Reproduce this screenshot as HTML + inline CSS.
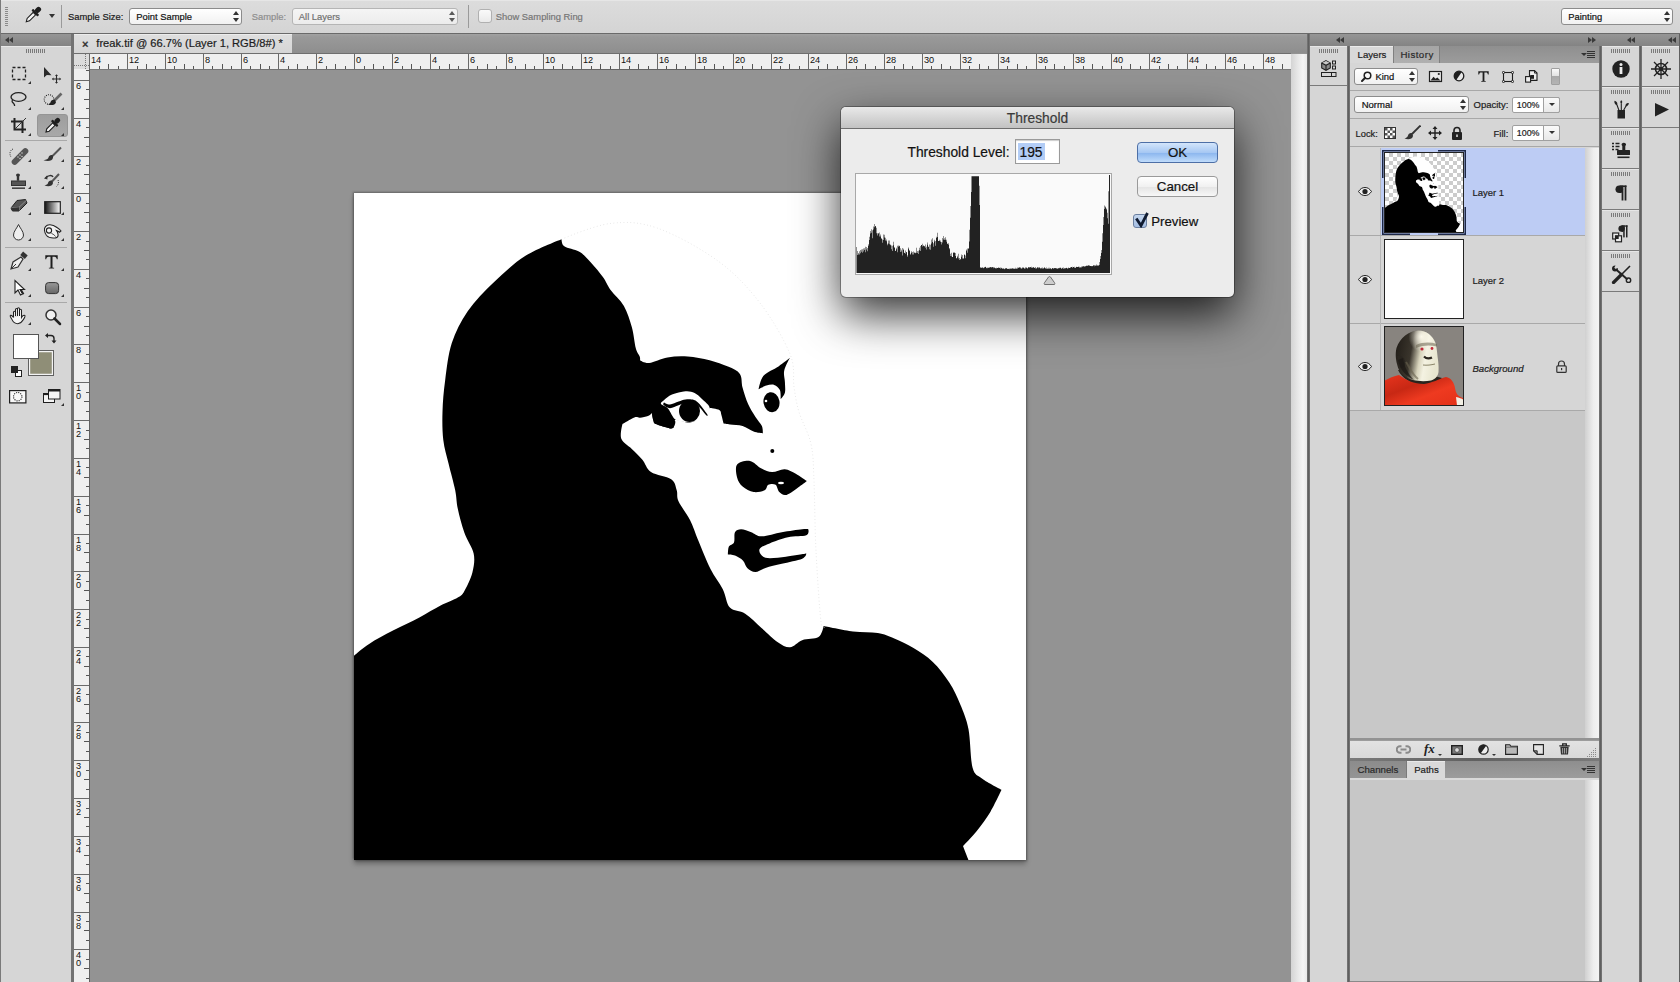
<!DOCTYPE html><html><head><meta charset="utf-8"><style>
*{margin:0;padding:0;box-sizing:border-box}
html,body{width:1680px;height:982px;overflow:hidden;background:#939393;font-family:"Liberation Sans", sans-serif;}
.a{position:absolute}
.t{position:absolute;white-space:nowrap;line-height:1;-webkit-text-stroke:0.2px currentColor}
.grip{position:absolute;height:4px;background:repeating-linear-gradient(90deg,#7a7a7a 0 1px,transparent 1px 2px)}
.vsep{position:absolute;background:#707070}
.tri{position:absolute;width:0;height:0;border-left:3px solid transparent;border-bottom:3px solid #333}
</style></head><body>
<div class="a" style="left:0;top:0;width:1680px;height:33px;background:linear-gradient(#dcdcdc,#d4d4d4);border-top:1px solid #e6e6e6"></div>
<div class="a" style="left:0;top:33px;width:1680px;height:1px;background:#6a6a6a"></div>
<div class="a" style="left:0;top:0;width:1px;height:982px;background:#7a7a7a"></div>
<div class="a" style="left:5px;top:7px;width:3px;height:19px;background:repeating-linear-gradient(180deg,#8a8a8a 0 1px,transparent 1px 2px)"></div>
<svg class="a" style="left:23px;top:6px" width="19" height="19" viewBox="0 0 19 19"><g transform="rotate(45 9.5 9.5)"><rect x="7" y="-1.5" width="5" height="6.3" rx="2.3" fill="#1e1e1e"/><rect x="5.2" y="4.3" width="8.6" height="2.5" rx=".8" fill="#1e1e1e"/><path d="M7.8 6.8h3.4v8.6L9.5 18.3l-1.7-2.9z" fill="#f4f4f4" stroke="#1e1e1e" stroke-width="1.1"/></g></svg>
<div class="a" style="left:49px;top:14px;width:0;height:0;border-left:3.5px solid transparent;border-right:3.5px solid transparent;border-top:4px solid #333"></div>
<div class="a" style="left:61px;top:5px;width:1px;height:23px;background:#9a9a9a"></div>
<div class="t" style="left:68px;top:12.00px;font-size:9.4px;color:#1a1a1a;">Sample Size:</div>
<div class="a" style="left:129px;top:8px;width:113px;height:17px;background:linear-gradient(#ffffff,#f1f1f1);border:1px solid #8c8c8c;border-radius:3px"></div><div class="t" style="left:136.3px;top:12.00px;font-size:9.4px;color:#111;">Point Sample</div><div class="a" style="left:233px;top:11px;width:0;height:0;border-left:3px solid transparent;border-right:3px solid transparent;border-bottom:4px solid #333"></div><div class="a" style="left:233px;top:18px;width:0;height:0;border-left:3px solid transparent;border-right:3px solid transparent;border-top:4px solid #333"></div>
<div class="t" style="left:251.7px;top:12.00px;font-size:9.4px;color:#8e8e8e;">Sample:</div>
<div class="a" style="left:292px;top:8px;width:166px;height:17px;background:linear-gradient(#f5f5f5,#ececec);border:1px solid #b5b5b5;border-radius:3px"></div><div class="t" style="left:298.8px;top:12.00px;font-size:9.4px;color:#707070;">All Layers</div><div class="a" style="left:449px;top:11px;width:0;height:0;border-left:3px solid transparent;border-right:3px solid transparent;border-bottom:4px solid #5a5a5a"></div><div class="a" style="left:449px;top:18px;width:0;height:0;border-left:3px solid transparent;border-right:3px solid transparent;border-top:4px solid #5a5a5a"></div>
<div class="a" style="left:468px;top:5px;width:1px;height:23px;background:#9a9a9a"></div>
<div class="a" style="left:478px;top:9px;width:14px;height:14px;border:1px solid #b0b0b0;border-radius:3px;background:linear-gradient(#fafafa,#eaeaea)"></div>
<div class="t" style="left:495.8px;top:12.00px;font-size:9.4px;color:#767676;">Show Sampling Ring</div>
<div class="a" style="left:1561px;top:8px;width:112px;height:17px;background:linear-gradient(#ffffff,#f1f1f1);border:1px solid #8c8c8c;border-radius:3px"></div><div class="t" style="left:1568.3px;top:12.00px;font-size:9.4px;color:#111;">Painting</div><div class="a" style="left:1664px;top:11px;width:0;height:0;border-left:3px solid transparent;border-right:3px solid transparent;border-bottom:4px solid #333"></div><div class="a" style="left:1664px;top:18px;width:0;height:0;border-left:3px solid transparent;border-right:3px solid transparent;border-top:4px solid #333"></div>
<div class="a" style="left:1px;top:34px;width:70px;height:12px;background:linear-gradient(#959595,#838383)"></div>
<div class="a" style="left:5px;top:37px;width:0;height:0;border-top:3px solid transparent;border-bottom:3px solid transparent;border-right:4px solid #3a3a3a"></div>
<div class="a" style="left:9px;top:37px;width:0;height:0;border-top:3px solid transparent;border-bottom:3px solid transparent;border-right:4px solid #3a3a3a"></div>
<div class="a" style="left:1px;top:46px;width:70px;height:936px;background:#d6d6d6;border-top:1px solid #e8e8e8"></div>
<div class="a" style="left:71px;top:34px;width:3px;height:948px;background:#737373"></div>
<div class="grip" style="left:26px;top:49px;width:20px"></div>
<div class="a" style="left:5px;top:140px;width:62px;height:1px;background:#a9a9a9"></div>
<div class="a" style="left:5px;top:247px;width:62px;height:1px;background:#a9a9a9"></div>
<div class="a" style="left:5px;top:302px;width:62px;height:1px;background:#a9a9a9"></div>
<div class="a" style="left:37px;top:114px;width:31px;height:23px;border-radius:3px;background:linear-gradient(#9e9e9e,#a8a8a8);border:1px solid #959595"></div>
<svg class="a" style="left:12px;top:67px;overflow:visible" width="15" height="14" viewBox="0 0 15 14"><rect x="0.5" y="0.5" width="13" height="12" fill="none" stroke="#222" stroke-width="1.3" stroke-dasharray="3 2"/></svg>
<svg class="a" style="left:44px;top:67px;overflow:visible" width="19" height="19" viewBox="0 0 19 19"><path d="M0 0 L0 10.5 L2.8 8 L7.5 8.3 Z" fill="#2a2a2a"/><path d="M12.5 8.5v7M9 12h7" stroke="#2a2a2a" stroke-width="1.1"/><path d="M12.5 7.3l-1.5 1.7h3zM12.5 16.7l-1.5-1.7h3zM7.8 12l1.7-1.5v3zM17.2 12l-1.7-1.5v3z" fill="#2a2a2a"/></svg>
<svg class="a" style="left:10px;top:92px;overflow:visible" width="17" height="15" viewBox="0 0 17 15"><ellipse cx="8.5" cy="5" rx="7.5" ry="4.3" fill="none" stroke="#222" stroke-width="1.3"/><path d="M2.5 8c-1 1.5 0 3 1.2 3.2M3.3 11c.6.8 1.5 1.6 1.3 3" fill="none" stroke="#222" stroke-width="1.3"/></svg>
<svg class="a" style="left:44px;top:93px;overflow:visible" width="18" height="13" viewBox="0 0 18 13"><circle cx="5" cy="6.5" r="4.8" fill="none" stroke="#222" stroke-width="1.1" stroke-dasharray="1 1.1"/><path d="M17.5 .5 10.5 7.5" stroke="#666" stroke-width="2.6"/><path d="M11 7c-1.8-.8-3.8 0-4.3 1.8-.4 1.3-1.3 2.2-2.7 2.6 3 1.3 7.3.8 8-2.2z" fill="#222"/></svg>
<svg class="a" style="left:11px;top:118px;overflow:visible" width="16" height="16" viewBox="0 0 16 16"><path d="M3.5 0v11.5H15M0 3.5h11.5V15" fill="none" stroke="#222" stroke-width="2"/><path d="M4 11L15 0" stroke="#333" stroke-width="1"/></svg>
<svg class="a" style="left:43px;top:117px;overflow:visible" width="18" height="18" viewBox="0 0 18 18"><g transform="rotate(45 9 9)"><rect x="6.6" y="-1.5" width="4.8" height="6" rx="2.2" fill="#1e1e1e"/><rect x="4.8" y="4" width="8.4" height="2.4" rx=".8" fill="#1e1e1e"/><path d="M7.3 6.4h3.4v8.3L9 17.5l-1.7-2.8z" fill="#f2f2f2" stroke="#1e1e1e" stroke-width="1.1"/></g></svg>
<svg class="a" style="left:9px;top:147px;overflow:visible" width="19" height="16" viewBox="0 0 19 16"><path d="M4 2c-3 1-4 5-2 8" fill="none" stroke="#333" stroke-width="1" stroke-dasharray="1 1.2"/><rect x="8" y="-1" width="6" height="21" rx="3" transform="rotate(45 11 9.5)" fill="#555"/><g fill="#ddd"><circle cx="9" cy="10" r=".7"/><circle cx="11" cy="8" r=".7"/><circle cx="13" cy="6" r=".7"/><circle cx="11" cy="11.5" r=".7"/><circle cx="13" cy="9.5" r=".7"/></g></svg>
<svg class="a" style="left:43px;top:147px;overflow:visible" width="18" height="15" viewBox="0 0 18 15"><path d="M18 .5 9.5 9" stroke="#555" stroke-width="2"/><path d="M10 8.5c-2-1-4 0-4.5 2-.3 1.4-2 2.2-5 2.8 4 1.3 9 1 9.5-2.5z" fill="#333"/></svg>
<svg class="a" style="left:11px;top:173px;overflow:visible" width="15" height="16" viewBox="0 0 15 16"><path d="M5.5 1a2.5 2.5 0 0 1 3 0c.8.8.4 2-.3 2.5v4.3H5.8V3.5C5.1 3 4.7 1.8 5.5 1z" fill="#333"/><rect x="0.5" y="8" width="14" height="4.5" fill="#555" stroke="#333"/><rect x="1" y="14.5" width="13" height="1.3" fill="#222"/></svg>
<svg class="a" style="left:43px;top:173px;overflow:visible" width="18" height="15" viewBox="0 0 18 15"><path d="M3 5c2-3 6-3 7-1" fill="none" stroke="#333" stroke-width="1.5"/><path d="M1 5.5 4 2.5 4.5 6.5z" fill="#333"/><path d="M16 1 9 8.5" stroke="#555" stroke-width="2"/><path d="M9.5 8c-2-1-4 0-4.5 2-.3 1.4-1.5 2-3.5 2.5 3.5 1.3 8 1 8.5-2.5z" fill="#333"/><path d="M15 7c1 2 .5 5-1.5 6.5" fill="none" stroke="#333" stroke-width="1" stroke-dasharray="1 1.2"/></svg>
<svg class="a" style="left:10px;top:199px;overflow:visible" width="18" height="13" viewBox="0 0 18 13"><path d="M7 1.5 15.5 .5 17 4 9 12H2.5L1 9z" fill="#555" stroke="#222" stroke-width="1"/><path d="M1 9 9 8.3 17 .8M9 8.3 9 12" fill="none" stroke="#999" stroke-width=".8"/><path d="M1 9 2.5 12H9V8.3z" fill="#333"/></svg>
<svg class="a" style="left:44px;top:201px;overflow:visible" width="17" height="13" viewBox="0 0 17 13"><defs><linearGradient id="gg"><stop offset="0" stop-color="#111"/><stop offset="1" stop-color="#fff"/></linearGradient></defs><rect x=".7" y=".7" width="15.6" height="11.6" fill="url(#gg)" stroke="#222" stroke-width="1.2"/></svg>
<svg class="a" style="left:13px;top:224px;overflow:visible" width="11" height="17" viewBox="0 0 11 17"><path d="M5.5.5C4 4 .5 7.5.5 11a5 5 0 0 0 10 0C10.5 7.5 7 4 5.5.5z" fill="#eee" stroke="#333" stroke-width="1"/></svg>
<svg class="a" style="left:43px;top:224px;overflow:visible" width="18" height="15" viewBox="0 0 18 15"><path d="M1.5 6.5C1 3.5 3 1 6.5.8 9.5.6 12 2 14 3.5 15.5 4.5 17 5.5 18 7l-1.5 1.2c-1-.8-2-1.3-3-1.6.8 1 1.3 2.2 1.5 3.5.3 1.6-.6 3.4-2.5 3.8C9 14.3 5.5 13.8 3.5 11.5 2.3 10 1.7 8.3 1.5 6.5z" fill="#f2f2f2" stroke="#222" stroke-width="1.1"/><circle cx="6" cy="6.5" r="2.6" fill="none" stroke="#222" stroke-width="1.1"/><path d="M8.5 9.5c1.5.5 3 1.5 4 3" fill="none" stroke="#222" stroke-width=".9"/></svg>
<svg class="a" style="left:10px;top:253px;overflow:visible" width="17" height="17" viewBox="0 0 17 17"><path d="M11 4 3 9 1 16l7-2 5-8z" fill="#eee" stroke="#333" stroke-width="1.2"/><path d="M1 16l5-5" stroke="#333" stroke-width="1"/><rect x="11" y="0" width="6" height="4.5" transform="rotate(40 14 2.2)" fill="#333"/></svg>
<svg class="a" style="left:45px;top:255px;overflow:visible" width="13" height="14" viewBox="0 0 13 14"><path d="M.3 .3h12.4v4h-.9C11.5 2.5 11 1.7 9.5 1.7H7.5v10.2c0 .6.4.8 1.6.8v.9H3.9v-.9c1.2 0 1.6-.2 1.6-.8V1.7h-2C2 1.7 1.5 2.5 1.2 4.3H.3z" fill="#1e1e1e"/></svg>
<svg class="a" style="left:14px;top:280px;overflow:visible" width="11" height="15" viewBox="0 0 11 15"><path d="M1 .5v12.5l3-3 2.5 5 2-1-2.5-4.5h4.5z" fill="#fff" stroke="#222" stroke-width="1.1"/><path d="M6 10l3 4.5 1.3-.7-2.5-4.3z" fill="#222"/></svg>
<svg class="a" style="left:45px;top:282px;overflow:visible" width="14" height="13" viewBox="0 0 14 13"><defs><linearGradient id="rg" x1="0" y1="0" x2="0" y2="1"><stop offset="0" stop-color="#999"/><stop offset="1" stop-color="#666"/></linearGradient></defs><rect x=".6" y=".6" width="13" height="11" rx="3" fill="url(#rg)" stroke="#333" stroke-width="1"/></svg>
<svg class="a" style="left:9px;top:307px;overflow:visible" width="17" height="17" viewBox="0 0 17 17"><path d="M4.5 10.5V5.2c0-1.4 2-1.4 2 0V9M6.5 9V2.5c0-1.4 2-1.4 2 0V9M8.5 9V1.7c0-1.4 2-1.4 2 0V9M10.5 9V3.3c0-1.4 2-1.4 2 0v7.2c.9-1.5 2.2-2.6 3.3-2 .8.5-.4 2.4-1.8 4.6-1.2 2-2.3 3.6-5.2 3.6-3 0-4.8-1.8-5.6-3.8C2.5 11.2 1 9.8 1.2 8.8c.3-1 2-.3 3.3 1.7" fill="#f6f6f6" stroke="#222" stroke-width="1.05"/></svg>
<svg class="a" style="left:45px;top:309px;overflow:visible" width="16" height="16" viewBox="0 0 16 16"><circle cx="6" cy="6" r="5" fill="#f0f0f0" stroke="#333" stroke-width="1.5"/><path d="M9.5 9.5l5.5 5.5" stroke="#222" stroke-width="2.5" stroke-linecap="round"/></svg>
<svg class="a" style="left:45px;top:332px;overflow:visible" width="12" height="12" viewBox="0 0 12 12"><path d="M2 3.5h4c2 0 3 1 3 3v2.5" fill="none" stroke="#222" stroke-width="1.4"/><path d="M0 3.5 3 1v5zM9 11.5l-2.5-3h5z" fill="#222"/></svg>
<svg class="a" style="left:9px;top:390px;overflow:visible" width="18" height="14" viewBox="0 0 18 14"><rect x=".6" y=".6" width="16.3" height="12.3" fill="#f8f8f8" stroke="#1e1e1e" stroke-width="1.2"/><circle cx="8.7" cy="6.7" r="4.2" fill="none" stroke="#1e1e1e" stroke-width="1.1" stroke-dasharray="1.1 1.1"/></svg>
<svg class="a" style="left:43px;top:389px;overflow:visible" width="18" height="14" viewBox="0 0 18 14"><rect x=".5" y="4.5" width="11" height="9" fill="#f4f4f4" stroke="#1e1e1e" stroke-width="1"/><rect x=".5" y="4.5" width="11" height="1.6" fill="#1e1e1e"/><rect x="5.5" y=".5" width="11.5" height="9.5" fill="#f4f4f4" stroke="#1e1e1e" stroke-width="1"/><rect x="5.5" y=".5" width="11.5" height="2" fill="#1e1e1e"/></svg>
<div class="tri" style="left:28px;top:81px"></div>
<div class="tri" style="left:28px;top:107px"></div>
<div class="tri" style="left:28px;top:133px"></div>
<div class="tri" style="left:61px;top:107px"></div>
<div class="tri" style="left:61px;top:133px"></div>
<div class="tri" style="left:28px;top:159px"></div>
<div class="tri" style="left:61px;top:159px"></div>
<div class="tri" style="left:28px;top:186px"></div>
<div class="tri" style="left:61px;top:186px"></div>
<div class="tri" style="left:28px;top:212px"></div>
<div class="tri" style="left:61px;top:212px"></div>
<div class="tri" style="left:28px;top:238px"></div>
<div class="tri" style="left:61px;top:238px"></div>
<div class="tri" style="left:28px;top:268px"></div>
<div class="tri" style="left:61px;top:268px"></div>
<div class="tri" style="left:28px;top:294px"></div>
<div class="tri" style="left:61px;top:294px"></div>
<div class="tri" style="left:28px;top:322px"></div>
<div class="tri" style="left:61px;top:403px"></div>
<div class="a" style="left:28px;top:350px;width:26px;height:26px;background:#8f8e77;border:1px solid #606060;box-shadow:inset 0 0 0 1.2px #f4f4f4"></div>
<div class="a" style="left:13px;top:334px;width:26px;height:25px;background:#fff;border:1px solid #555"></div>
<div class="a" style="left:15px;top:370px;width:7px;height:7px;background:#fff;border:1px solid #222"></div>
<div class="a" style="left:11px;top:366px;width:7px;height:7px;background:#222"></div>
<div class="a" style="left:74px;top:34px;width:1233px;height:19px;background:linear-gradient(#a2a2a2,#999 15%,#8e8e8e)"></div>
<div class="a" style="left:74px;top:34px;width:218px;height:19px;background:linear-gradient(#dedede,#d5d5d5);border-top:1px solid #ececec"></div>
<div class="t" style="left:82px;top:39px;font-size:11px;color:#333;font-weight:bold">&#215;</div>
<div class="t" style="left:96.3px;top:38.00px;font-size:11.15px;color:#1d1d1d;">freak.tif @ 66.7% (Layer 1, RGB/8#) *</div>
<div class="a" style="left:74px;top:53px;width:1217px;height:1px;background:#6e6e6e"></div>
<div class="a" style="left:74px;top:54px;width:1217px;height:15px;background:#efefef"></div>
<div class="a" style="left:74px;top:69px;width:1217px;height:1px;background:linear-gradient(90deg,#7a7a7a,#606060 50%,#7a7a7a)"></div>
<div class="a" style="left:74px;top:54px;width:15px;height:928px;background:#efefef"></div>
<div class="a" style="left:89px;top:69px;width:1px;height:913px;background:linear-gradient(90deg,#7a7a7a,#606060 50%,#7a7a7a)"></div>
<div class="a" style="left:74px;top:54px;width:15px;height:15px;background:#dcdcdc"></div>
<div class="a" style="left:85px;top:54px;width:1px;height:16px;background:repeating-linear-gradient(180deg,#777 0 1px,transparent 1px 2px)"></div>
<div class="a" style="left:74px;top:65px;width:15px;height:1px;background:repeating-linear-gradient(90deg,#777 0 1px,transparent 1px 2px)"></div>
<div class="a" style="left:89px;top:54px;width:1px;height:15px;background:#6a6a6a"></div><div class="t" style="left:91px;top:56px;font-size:9.2px;color:#111;-webkit-text-stroke:0">14</div><div class="a" style="left:99px;top:66px;width:1px;height:3px;background:#555"></div><div class="a" style="left:108px;top:64px;width:1px;height:5px;background:#555"></div><div class="a" style="left:118px;top:66px;width:1px;height:3px;background:#555"></div><div class="a" style="left:127px;top:54px;width:1px;height:15px;background:#6a6a6a"></div><div class="t" style="left:129px;top:56px;font-size:9.2px;color:#111;-webkit-text-stroke:0">12</div><div class="a" style="left:137px;top:66px;width:1px;height:3px;background:#555"></div><div class="a" style="left:146px;top:64px;width:1px;height:5px;background:#555"></div><div class="a" style="left:155px;top:66px;width:1px;height:3px;background:#555"></div><div class="a" style="left:165px;top:54px;width:1px;height:15px;background:#6a6a6a"></div><div class="t" style="left:167px;top:56px;font-size:9.2px;color:#111;-webkit-text-stroke:0">10</div><div class="a" style="left:174px;top:66px;width:1px;height:3px;background:#555"></div><div class="a" style="left:184px;top:64px;width:1px;height:5px;background:#555"></div><div class="a" style="left:193px;top:66px;width:1px;height:3px;background:#555"></div><div class="a" style="left:203px;top:54px;width:1px;height:15px;background:#6a6a6a"></div><div class="t" style="left:205px;top:56px;font-size:9.2px;color:#111;-webkit-text-stroke:0">8</div><div class="a" style="left:212px;top:66px;width:1px;height:3px;background:#555"></div><div class="a" style="left:222px;top:64px;width:1px;height:5px;background:#555"></div><div class="a" style="left:231px;top:66px;width:1px;height:3px;background:#555"></div><div class="a" style="left:241px;top:54px;width:1px;height:15px;background:#6a6a6a"></div><div class="t" style="left:243px;top:56px;font-size:9.2px;color:#111;-webkit-text-stroke:0">6</div><div class="a" style="left:250px;top:66px;width:1px;height:3px;background:#555"></div><div class="a" style="left:260px;top:64px;width:1px;height:5px;background:#555"></div><div class="a" style="left:269px;top:66px;width:1px;height:3px;background:#555"></div><div class="a" style="left:278px;top:54px;width:1px;height:15px;background:#6a6a6a"></div><div class="t" style="left:280px;top:56px;font-size:9.2px;color:#111;-webkit-text-stroke:0">4</div><div class="a" style="left:288px;top:66px;width:1px;height:3px;background:#555"></div><div class="a" style="left:297px;top:64px;width:1px;height:5px;background:#555"></div><div class="a" style="left:307px;top:66px;width:1px;height:3px;background:#555"></div><div class="a" style="left:316px;top:54px;width:1px;height:15px;background:#6a6a6a"></div><div class="t" style="left:318px;top:56px;font-size:9.2px;color:#111;-webkit-text-stroke:0">2</div><div class="a" style="left:326px;top:66px;width:1px;height:3px;background:#555"></div><div class="a" style="left:335px;top:64px;width:1px;height:5px;background:#555"></div><div class="a" style="left:345px;top:66px;width:1px;height:3px;background:#555"></div><div class="a" style="left:354px;top:54px;width:1px;height:15px;background:#6a6a6a"></div><div class="t" style="left:356px;top:56px;font-size:9.2px;color:#111;-webkit-text-stroke:0">0</div><div class="a" style="left:364px;top:66px;width:1px;height:3px;background:#555"></div><div class="a" style="left:373px;top:64px;width:1px;height:5px;background:#555"></div><div class="a" style="left:383px;top:66px;width:1px;height:3px;background:#555"></div><div class="a" style="left:392px;top:54px;width:1px;height:15px;background:#6a6a6a"></div><div class="t" style="left:394px;top:56px;font-size:9.2px;color:#111;-webkit-text-stroke:0">2</div><div class="a" style="left:402px;top:66px;width:1px;height:3px;background:#555"></div><div class="a" style="left:411px;top:64px;width:1px;height:5px;background:#555"></div><div class="a" style="left:420px;top:66px;width:1px;height:3px;background:#555"></div><div class="a" style="left:430px;top:54px;width:1px;height:15px;background:#6a6a6a"></div><div class="t" style="left:432px;top:56px;font-size:9.2px;color:#111;-webkit-text-stroke:0">4</div><div class="a" style="left:439px;top:66px;width:1px;height:3px;background:#555"></div><div class="a" style="left:449px;top:64px;width:1px;height:5px;background:#555"></div><div class="a" style="left:458px;top:66px;width:1px;height:3px;background:#555"></div><div class="a" style="left:468px;top:54px;width:1px;height:15px;background:#6a6a6a"></div><div class="t" style="left:470px;top:56px;font-size:9.2px;color:#111;-webkit-text-stroke:0">6</div><div class="a" style="left:477px;top:66px;width:1px;height:3px;background:#555"></div><div class="a" style="left:487px;top:64px;width:1px;height:5px;background:#555"></div><div class="a" style="left:496px;top:66px;width:1px;height:3px;background:#555"></div><div class="a" style="left:506px;top:54px;width:1px;height:15px;background:#6a6a6a"></div><div class="t" style="left:508px;top:56px;font-size:9.2px;color:#111;-webkit-text-stroke:0">8</div><div class="a" style="left:515px;top:66px;width:1px;height:3px;background:#555"></div><div class="a" style="left:525px;top:64px;width:1px;height:5px;background:#555"></div><div class="a" style="left:534px;top:66px;width:1px;height:3px;background:#555"></div><div class="a" style="left:543px;top:54px;width:1px;height:15px;background:#6a6a6a"></div><div class="t" style="left:545px;top:56px;font-size:9.2px;color:#111;-webkit-text-stroke:0">10</div><div class="a" style="left:553px;top:66px;width:1px;height:3px;background:#555"></div><div class="a" style="left:562px;top:64px;width:1px;height:5px;background:#555"></div><div class="a" style="left:572px;top:66px;width:1px;height:3px;background:#555"></div><div class="a" style="left:581px;top:54px;width:1px;height:15px;background:#6a6a6a"></div><div class="t" style="left:583px;top:56px;font-size:9.2px;color:#111;-webkit-text-stroke:0">12</div><div class="a" style="left:591px;top:66px;width:1px;height:3px;background:#555"></div><div class="a" style="left:600px;top:64px;width:1px;height:5px;background:#555"></div><div class="a" style="left:610px;top:66px;width:1px;height:3px;background:#555"></div><div class="a" style="left:619px;top:54px;width:1px;height:15px;background:#6a6a6a"></div><div class="t" style="left:621px;top:56px;font-size:9.2px;color:#111;-webkit-text-stroke:0">14</div><div class="a" style="left:629px;top:66px;width:1px;height:3px;background:#555"></div><div class="a" style="left:638px;top:64px;width:1px;height:5px;background:#555"></div><div class="a" style="left:648px;top:66px;width:1px;height:3px;background:#555"></div><div class="a" style="left:657px;top:54px;width:1px;height:15px;background:#6a6a6a"></div><div class="t" style="left:659px;top:56px;font-size:9.2px;color:#111;-webkit-text-stroke:0">16</div><div class="a" style="left:666px;top:66px;width:1px;height:3px;background:#555"></div><div class="a" style="left:676px;top:64px;width:1px;height:5px;background:#555"></div><div class="a" style="left:685px;top:66px;width:1px;height:3px;background:#555"></div><div class="a" style="left:695px;top:54px;width:1px;height:15px;background:#6a6a6a"></div><div class="t" style="left:697px;top:56px;font-size:9.2px;color:#111;-webkit-text-stroke:0">18</div><div class="a" style="left:704px;top:66px;width:1px;height:3px;background:#555"></div><div class="a" style="left:714px;top:64px;width:1px;height:5px;background:#555"></div><div class="a" style="left:723px;top:66px;width:1px;height:3px;background:#555"></div><div class="a" style="left:733px;top:54px;width:1px;height:15px;background:#6a6a6a"></div><div class="t" style="left:735px;top:56px;font-size:9.2px;color:#111;-webkit-text-stroke:0">20</div><div class="a" style="left:742px;top:66px;width:1px;height:3px;background:#555"></div><div class="a" style="left:752px;top:64px;width:1px;height:5px;background:#555"></div><div class="a" style="left:761px;top:66px;width:1px;height:3px;background:#555"></div><div class="a" style="left:771px;top:54px;width:1px;height:15px;background:#6a6a6a"></div><div class="t" style="left:773px;top:56px;font-size:9.2px;color:#111;-webkit-text-stroke:0">22</div><div class="a" style="left:780px;top:66px;width:1px;height:3px;background:#555"></div><div class="a" style="left:789px;top:64px;width:1px;height:5px;background:#555"></div><div class="a" style="left:799px;top:66px;width:1px;height:3px;background:#555"></div><div class="a" style="left:808px;top:54px;width:1px;height:15px;background:#6a6a6a"></div><div class="t" style="left:810px;top:56px;font-size:9.2px;color:#111;-webkit-text-stroke:0">24</div><div class="a" style="left:818px;top:66px;width:1px;height:3px;background:#555"></div><div class="a" style="left:827px;top:64px;width:1px;height:5px;background:#555"></div><div class="a" style="left:837px;top:66px;width:1px;height:3px;background:#555"></div><div class="a" style="left:846px;top:54px;width:1px;height:15px;background:#6a6a6a"></div><div class="t" style="left:848px;top:56px;font-size:9.2px;color:#111;-webkit-text-stroke:0">26</div><div class="a" style="left:856px;top:66px;width:1px;height:3px;background:#555"></div><div class="a" style="left:865px;top:64px;width:1px;height:5px;background:#555"></div><div class="a" style="left:875px;top:66px;width:1px;height:3px;background:#555"></div><div class="a" style="left:884px;top:54px;width:1px;height:15px;background:#6a6a6a"></div><div class="t" style="left:886px;top:56px;font-size:9.2px;color:#111;-webkit-text-stroke:0">28</div><div class="a" style="left:894px;top:66px;width:1px;height:3px;background:#555"></div><div class="a" style="left:903px;top:64px;width:1px;height:5px;background:#555"></div><div class="a" style="left:912px;top:66px;width:1px;height:3px;background:#555"></div><div class="a" style="left:922px;top:54px;width:1px;height:15px;background:#6a6a6a"></div><div class="t" style="left:924px;top:56px;font-size:9.2px;color:#111;-webkit-text-stroke:0">30</div><div class="a" style="left:931px;top:66px;width:1px;height:3px;background:#555"></div><div class="a" style="left:941px;top:64px;width:1px;height:5px;background:#555"></div><div class="a" style="left:950px;top:66px;width:1px;height:3px;background:#555"></div><div class="a" style="left:960px;top:54px;width:1px;height:15px;background:#6a6a6a"></div><div class="t" style="left:962px;top:56px;font-size:9.2px;color:#111;-webkit-text-stroke:0">32</div><div class="a" style="left:969px;top:66px;width:1px;height:3px;background:#555"></div><div class="a" style="left:979px;top:64px;width:1px;height:5px;background:#555"></div><div class="a" style="left:988px;top:66px;width:1px;height:3px;background:#555"></div><div class="a" style="left:998px;top:54px;width:1px;height:15px;background:#6a6a6a"></div><div class="t" style="left:1000px;top:56px;font-size:9.2px;color:#111;-webkit-text-stroke:0">34</div><div class="a" style="left:1007px;top:66px;width:1px;height:3px;background:#555"></div><div class="a" style="left:1017px;top:64px;width:1px;height:5px;background:#555"></div><div class="a" style="left:1026px;top:66px;width:1px;height:3px;background:#555"></div><div class="a" style="left:1036px;top:54px;width:1px;height:15px;background:#6a6a6a"></div><div class="t" style="left:1038px;top:56px;font-size:9.2px;color:#111;-webkit-text-stroke:0">36</div><div class="a" style="left:1045px;top:66px;width:1px;height:3px;background:#555"></div><div class="a" style="left:1054px;top:64px;width:1px;height:5px;background:#555"></div><div class="a" style="left:1064px;top:66px;width:1px;height:3px;background:#555"></div><div class="a" style="left:1073px;top:54px;width:1px;height:15px;background:#6a6a6a"></div><div class="t" style="left:1075px;top:56px;font-size:9.2px;color:#111;-webkit-text-stroke:0">38</div><div class="a" style="left:1083px;top:66px;width:1px;height:3px;background:#555"></div><div class="a" style="left:1092px;top:64px;width:1px;height:5px;background:#555"></div><div class="a" style="left:1102px;top:66px;width:1px;height:3px;background:#555"></div><div class="a" style="left:1111px;top:54px;width:1px;height:15px;background:#6a6a6a"></div><div class="t" style="left:1113px;top:56px;font-size:9.2px;color:#111;-webkit-text-stroke:0">40</div><div class="a" style="left:1121px;top:66px;width:1px;height:3px;background:#555"></div><div class="a" style="left:1130px;top:64px;width:1px;height:5px;background:#555"></div><div class="a" style="left:1140px;top:66px;width:1px;height:3px;background:#555"></div><div class="a" style="left:1149px;top:54px;width:1px;height:15px;background:#6a6a6a"></div><div class="t" style="left:1151px;top:56px;font-size:9.2px;color:#111;-webkit-text-stroke:0">42</div><div class="a" style="left:1159px;top:66px;width:1px;height:3px;background:#555"></div><div class="a" style="left:1168px;top:64px;width:1px;height:5px;background:#555"></div><div class="a" style="left:1177px;top:66px;width:1px;height:3px;background:#555"></div><div class="a" style="left:1187px;top:54px;width:1px;height:15px;background:#6a6a6a"></div><div class="t" style="left:1189px;top:56px;font-size:9.2px;color:#111;-webkit-text-stroke:0">44</div><div class="a" style="left:1196px;top:66px;width:1px;height:3px;background:#555"></div><div class="a" style="left:1206px;top:64px;width:1px;height:5px;background:#555"></div><div class="a" style="left:1215px;top:66px;width:1px;height:3px;background:#555"></div><div class="a" style="left:1225px;top:54px;width:1px;height:15px;background:#6a6a6a"></div><div class="t" style="left:1227px;top:56px;font-size:9.2px;color:#111;-webkit-text-stroke:0">46</div><div class="a" style="left:1234px;top:66px;width:1px;height:3px;background:#555"></div><div class="a" style="left:1244px;top:64px;width:1px;height:5px;background:#555"></div><div class="a" style="left:1253px;top:66px;width:1px;height:3px;background:#555"></div><div class="a" style="left:1263px;top:54px;width:1px;height:15px;background:#6a6a6a"></div><div class="t" style="left:1265px;top:56px;font-size:9.2px;color:#111;-webkit-text-stroke:0">48</div><div class="a" style="left:1272px;top:66px;width:1px;height:3px;background:#555"></div><div class="a" style="left:1282px;top:64px;width:1px;height:5px;background:#555"></div>
<div class="a" style="left:86px;top:70px;width:3px;height:1px;background:#555"></div><div class="a" style="left:74px;top:80px;width:15px;height:1px;background:#6a6a6a"></div><div class="t" style="left:76px;top:82px;font-size:9.2px;color:#111;-webkit-text-stroke:0">6</div><div class="a" style="left:86px;top:89px;width:3px;height:1px;background:#555"></div><div class="a" style="left:84px;top:99px;width:5px;height:1px;background:#555"></div><div class="a" style="left:86px;top:108px;width:3px;height:1px;background:#555"></div><div class="a" style="left:74px;top:118px;width:15px;height:1px;background:#6a6a6a"></div><div class="t" style="left:76px;top:120px;font-size:9.2px;color:#111;-webkit-text-stroke:0">4</div><div class="a" style="left:86px;top:127px;width:3px;height:1px;background:#555"></div><div class="a" style="left:84px;top:137px;width:5px;height:1px;background:#555"></div><div class="a" style="left:86px;top:146px;width:3px;height:1px;background:#555"></div><div class="a" style="left:74px;top:156px;width:15px;height:1px;background:#6a6a6a"></div><div class="t" style="left:76px;top:158px;font-size:9.2px;color:#111;-webkit-text-stroke:0">2</div><div class="a" style="left:86px;top:165px;width:3px;height:1px;background:#555"></div><div class="a" style="left:84px;top:174px;width:5px;height:1px;background:#555"></div><div class="a" style="left:86px;top:184px;width:3px;height:1px;background:#555"></div><div class="a" style="left:74px;top:193px;width:15px;height:1px;background:#6a6a6a"></div><div class="t" style="left:76px;top:195px;font-size:9.2px;color:#111;-webkit-text-stroke:0">0</div><div class="a" style="left:86px;top:203px;width:3px;height:1px;background:#555"></div><div class="a" style="left:84px;top:212px;width:5px;height:1px;background:#555"></div><div class="a" style="left:86px;top:222px;width:3px;height:1px;background:#555"></div><div class="a" style="left:74px;top:231px;width:15px;height:1px;background:#6a6a6a"></div><div class="t" style="left:76px;top:233px;font-size:9.2px;color:#111;-webkit-text-stroke:0">2</div><div class="a" style="left:86px;top:241px;width:3px;height:1px;background:#555"></div><div class="a" style="left:84px;top:250px;width:5px;height:1px;background:#555"></div><div class="a" style="left:86px;top:259px;width:3px;height:1px;background:#555"></div><div class="a" style="left:74px;top:269px;width:15px;height:1px;background:#6a6a6a"></div><div class="t" style="left:76px;top:271px;font-size:9.2px;color:#111;-webkit-text-stroke:0">4</div><div class="a" style="left:86px;top:278px;width:3px;height:1px;background:#555"></div><div class="a" style="left:84px;top:288px;width:5px;height:1px;background:#555"></div><div class="a" style="left:86px;top:297px;width:3px;height:1px;background:#555"></div><div class="a" style="left:74px;top:307px;width:15px;height:1px;background:#6a6a6a"></div><div class="t" style="left:76px;top:309px;font-size:9.2px;color:#111;-webkit-text-stroke:0">6</div><div class="a" style="left:86px;top:316px;width:3px;height:1px;background:#555"></div><div class="a" style="left:84px;top:326px;width:5px;height:1px;background:#555"></div><div class="a" style="left:86px;top:335px;width:3px;height:1px;background:#555"></div><div class="a" style="left:74px;top:344px;width:15px;height:1px;background:#6a6a6a"></div><div class="t" style="left:76px;top:346px;font-size:9.2px;color:#111;-webkit-text-stroke:0">8</div><div class="a" style="left:86px;top:354px;width:3px;height:1px;background:#555"></div><div class="a" style="left:84px;top:363px;width:5px;height:1px;background:#555"></div><div class="a" style="left:86px;top:373px;width:3px;height:1px;background:#555"></div><div class="a" style="left:74px;top:382px;width:15px;height:1px;background:#6a6a6a"></div><div class="t" style="left:76px;top:384px;font-size:9.2px;color:#111;-webkit-text-stroke:0">1</div><div class="t" style="left:76px;top:392px;font-size:9.2px;color:#111;-webkit-text-stroke:0">0</div><div class="a" style="left:86px;top:392px;width:3px;height:1px;background:#555"></div><div class="a" style="left:84px;top:401px;width:5px;height:1px;background:#555"></div><div class="a" style="left:86px;top:411px;width:3px;height:1px;background:#555"></div><div class="a" style="left:74px;top:420px;width:15px;height:1px;background:#6a6a6a"></div><div class="t" style="left:76px;top:422px;font-size:9.2px;color:#111;-webkit-text-stroke:0">1</div><div class="t" style="left:76px;top:430px;font-size:9.2px;color:#111;-webkit-text-stroke:0">2</div><div class="a" style="left:86px;top:430px;width:3px;height:1px;background:#555"></div><div class="a" style="left:84px;top:439px;width:5px;height:1px;background:#555"></div><div class="a" style="left:86px;top:448px;width:3px;height:1px;background:#555"></div><div class="a" style="left:74px;top:458px;width:15px;height:1px;background:#6a6a6a"></div><div class="t" style="left:76px;top:460px;font-size:9.2px;color:#111;-webkit-text-stroke:0">1</div><div class="t" style="left:76px;top:468px;font-size:9.2px;color:#111;-webkit-text-stroke:0">4</div><div class="a" style="left:86px;top:467px;width:3px;height:1px;background:#555"></div><div class="a" style="left:84px;top:477px;width:5px;height:1px;background:#555"></div><div class="a" style="left:86px;top:486px;width:3px;height:1px;background:#555"></div><div class="a" style="left:74px;top:496px;width:15px;height:1px;background:#6a6a6a"></div><div class="t" style="left:76px;top:498px;font-size:9.2px;color:#111;-webkit-text-stroke:0">1</div><div class="t" style="left:76px;top:506px;font-size:9.2px;color:#111;-webkit-text-stroke:0">6</div><div class="a" style="left:86px;top:505px;width:3px;height:1px;background:#555"></div><div class="a" style="left:84px;top:515px;width:5px;height:1px;background:#555"></div><div class="a" style="left:86px;top:524px;width:3px;height:1px;background:#555"></div><div class="a" style="left:74px;top:534px;width:15px;height:1px;background:#6a6a6a"></div><div class="t" style="left:76px;top:536px;font-size:9.2px;color:#111;-webkit-text-stroke:0">1</div><div class="t" style="left:76px;top:544px;font-size:9.2px;color:#111;-webkit-text-stroke:0">8</div><div class="a" style="left:86px;top:543px;width:3px;height:1px;background:#555"></div><div class="a" style="left:84px;top:552px;width:5px;height:1px;background:#555"></div><div class="a" style="left:86px;top:562px;width:3px;height:1px;background:#555"></div><div class="a" style="left:74px;top:571px;width:15px;height:1px;background:#6a6a6a"></div><div class="t" style="left:76px;top:573px;font-size:9.2px;color:#111;-webkit-text-stroke:0">2</div><div class="t" style="left:76px;top:581px;font-size:9.2px;color:#111;-webkit-text-stroke:0">0</div><div class="a" style="left:86px;top:581px;width:3px;height:1px;background:#555"></div><div class="a" style="left:84px;top:590px;width:5px;height:1px;background:#555"></div><div class="a" style="left:86px;top:600px;width:3px;height:1px;background:#555"></div><div class="a" style="left:74px;top:609px;width:15px;height:1px;background:#6a6a6a"></div><div class="t" style="left:76px;top:611px;font-size:9.2px;color:#111;-webkit-text-stroke:0">2</div><div class="t" style="left:76px;top:619px;font-size:9.2px;color:#111;-webkit-text-stroke:0">2</div><div class="a" style="left:86px;top:619px;width:3px;height:1px;background:#555"></div><div class="a" style="left:84px;top:628px;width:5px;height:1px;background:#555"></div><div class="a" style="left:86px;top:637px;width:3px;height:1px;background:#555"></div><div class="a" style="left:74px;top:647px;width:15px;height:1px;background:#6a6a6a"></div><div class="t" style="left:76px;top:649px;font-size:9.2px;color:#111;-webkit-text-stroke:0">2</div><div class="t" style="left:76px;top:657px;font-size:9.2px;color:#111;-webkit-text-stroke:0">4</div><div class="a" style="left:86px;top:656px;width:3px;height:1px;background:#555"></div><div class="a" style="left:84px;top:666px;width:5px;height:1px;background:#555"></div><div class="a" style="left:86px;top:675px;width:3px;height:1px;background:#555"></div><div class="a" style="left:74px;top:685px;width:15px;height:1px;background:#6a6a6a"></div><div class="t" style="left:76px;top:687px;font-size:9.2px;color:#111;-webkit-text-stroke:0">2</div><div class="t" style="left:76px;top:695px;font-size:9.2px;color:#111;-webkit-text-stroke:0">6</div><div class="a" style="left:86px;top:694px;width:3px;height:1px;background:#555"></div><div class="a" style="left:84px;top:704px;width:5px;height:1px;background:#555"></div><div class="a" style="left:86px;top:713px;width:3px;height:1px;background:#555"></div><div class="a" style="left:74px;top:722px;width:15px;height:1px;background:#6a6a6a"></div><div class="t" style="left:76px;top:724px;font-size:9.2px;color:#111;-webkit-text-stroke:0">2</div><div class="t" style="left:76px;top:732px;font-size:9.2px;color:#111;-webkit-text-stroke:0">8</div><div class="a" style="left:86px;top:732px;width:3px;height:1px;background:#555"></div><div class="a" style="left:84px;top:741px;width:5px;height:1px;background:#555"></div><div class="a" style="left:86px;top:751px;width:3px;height:1px;background:#555"></div><div class="a" style="left:74px;top:760px;width:15px;height:1px;background:#6a6a6a"></div><div class="t" style="left:76px;top:762px;font-size:9.2px;color:#111;-webkit-text-stroke:0">3</div><div class="t" style="left:76px;top:770px;font-size:9.2px;color:#111;-webkit-text-stroke:0">0</div><div class="a" style="left:86px;top:770px;width:3px;height:1px;background:#555"></div><div class="a" style="left:84px;top:779px;width:5px;height:1px;background:#555"></div><div class="a" style="left:86px;top:789px;width:3px;height:1px;background:#555"></div><div class="a" style="left:74px;top:798px;width:15px;height:1px;background:#6a6a6a"></div><div class="t" style="left:76px;top:800px;font-size:9.2px;color:#111;-webkit-text-stroke:0">3</div><div class="t" style="left:76px;top:808px;font-size:9.2px;color:#111;-webkit-text-stroke:0">2</div><div class="a" style="left:86px;top:808px;width:3px;height:1px;background:#555"></div><div class="a" style="left:84px;top:817px;width:5px;height:1px;background:#555"></div><div class="a" style="left:86px;top:826px;width:3px;height:1px;background:#555"></div><div class="a" style="left:74px;top:836px;width:15px;height:1px;background:#6a6a6a"></div><div class="t" style="left:76px;top:838px;font-size:9.2px;color:#111;-webkit-text-stroke:0">3</div><div class="t" style="left:76px;top:846px;font-size:9.2px;color:#111;-webkit-text-stroke:0">4</div><div class="a" style="left:86px;top:845px;width:3px;height:1px;background:#555"></div><div class="a" style="left:84px;top:855px;width:5px;height:1px;background:#555"></div><div class="a" style="left:86px;top:864px;width:3px;height:1px;background:#555"></div><div class="a" style="left:74px;top:874px;width:15px;height:1px;background:#6a6a6a"></div><div class="t" style="left:76px;top:876px;font-size:9.2px;color:#111;-webkit-text-stroke:0">3</div><div class="t" style="left:76px;top:884px;font-size:9.2px;color:#111;-webkit-text-stroke:0">6</div><div class="a" style="left:86px;top:883px;width:3px;height:1px;background:#555"></div><div class="a" style="left:84px;top:893px;width:5px;height:1px;background:#555"></div><div class="a" style="left:86px;top:902px;width:3px;height:1px;background:#555"></div><div class="a" style="left:74px;top:912px;width:15px;height:1px;background:#6a6a6a"></div><div class="t" style="left:76px;top:914px;font-size:9.2px;color:#111;-webkit-text-stroke:0">3</div><div class="t" style="left:76px;top:922px;font-size:9.2px;color:#111;-webkit-text-stroke:0">8</div><div class="a" style="left:86px;top:921px;width:3px;height:1px;background:#555"></div><div class="a" style="left:84px;top:930px;width:5px;height:1px;background:#555"></div><div class="a" style="left:86px;top:940px;width:3px;height:1px;background:#555"></div><div class="a" style="left:74px;top:949px;width:15px;height:1px;background:#6a6a6a"></div><div class="t" style="left:76px;top:951px;font-size:9.2px;color:#111;-webkit-text-stroke:0">4</div><div class="t" style="left:76px;top:959px;font-size:9.2px;color:#111;-webkit-text-stroke:0">0</div><div class="a" style="left:86px;top:959px;width:3px;height:1px;background:#555"></div><div class="a" style="left:84px;top:968px;width:5px;height:1px;background:#555"></div><div class="a" style="left:86px;top:978px;width:3px;height:1px;background:#555"></div>
<div class="a" style="left:1291px;top:54px;width:16px;height:928px;background:linear-gradient(90deg,#d4d4d4,#e6e6e6 40%,#f5f5f5 75%,#e9e9e9)"></div>
<div class="a" style="left:1307px;top:34px;width:3px;height:948px;background:linear-gradient(90deg,#7a7a7a,#606060 50%,#7a7a7a)"></div>
<div class="a" style="left:354px;top:193px;width:672px;height:667px;background:#fff;box-shadow:-1px -1px 2px rgba(0,0,0,.3), 1px 1px 2px rgba(0,0,0,.3), 0 4px 5px rgba(0,0,0,.28)"></div>
<svg class="a" style="left:354px;top:193px" width="672" height="667" viewBox="0 0 672 667"><path fill="#000" d="M207.6,46.2 C207.6,46.2 183.1,55.5 171.9,62.6 C160.6,69.7 149.8,79.7 140.1,89.0 C130.4,98.3 120.7,108.0 113.7,118.2 C106.6,128.4 101.6,138.5 97.8,150.0 C94.1,161.5 92.7,175.5 91.2,187.0 C89.6,198.5 88.8,208.8 88.5,218.8 C88.2,228.8 88.3,238.3 89.3,247.0 C90.3,255.7 92.6,262.4 94.6,270.8 C96.6,279.2 99.7,289.8 101.2,297.3 C102.7,304.8 102.3,308.7 103.8,315.8 C105.3,322.9 107.7,332.2 110.4,339.7 C113.0,347.2 118.4,354.2 119.7,360.8 C121.0,367.4 119.9,373.2 118.4,379.4 C116.8,385.6 112.8,393.7 110.4,397.9 C108.0,402.1 107.8,402.1 103.8,404.5 C99.8,406.9 93.0,409.2 86.6,412.5 C80.2,415.8 73.3,420.2 65.4,424.4 C57.5,428.6 47.4,433.2 39.0,437.6 C30.6,442.0 21.6,446.7 15.1,450.9 C8.6,455.1 -0.2,462.8 -0.2,462.8 C-0.2,462.8 -0.2,667.0 -0.2,667.0 C-0.2,667.0 614.5,667.0 614.5,667.0 C614.5,667.0 609.0,653.1 609.0,653.1 C609.0,653.1 618.2,643.7 622.8,638.0 C627.4,632.3 632.4,625.7 636.5,618.8 C640.6,611.9 647.5,596.8 647.5,596.8 C647.5,596.8 633.1,589.5 628.3,585.8 C623.5,582.1 620.9,583.0 618.6,574.8 C616.3,566.5 616.5,546.8 614.5,536.3 C612.5,525.8 609.5,519.3 606.3,511.5 C603.1,503.7 599.9,496.6 595.3,489.5 C590.7,482.4 584.8,474.6 578.8,468.9 C572.8,463.2 565.9,459.0 559.5,455.1 C553.1,451.2 546.2,448.0 540.3,445.5 C534.3,443.0 530.7,441.1 523.8,440.0 C516.9,438.9 507.9,439.8 499.0,438.6 C490.1,437.5 470.1,433.1 470.1,433.1 C470.1,433.1 469.6,432.9 469.6,432.9 C469.6,432.9 468.1,441.7 464.5,444.1 C460.9,446.5 453.0,445.5 448.2,447.2 C443.5,448.9 440.1,454.0 436.0,454.3 C431.9,454.6 428.5,452.4 423.8,449.2 C419.0,446.0 412.9,439.8 407.5,435.0 C402.1,430.2 396.5,424.1 391.2,420.7 C385.9,417.3 379.6,418.7 375.9,414.6 C372.2,410.5 372.0,402.7 368.8,396.2 C365.6,389.8 360.6,384.0 356.5,375.9 C352.4,367.8 347.7,355.5 344.3,347.4 C340.9,339.2 339.3,333.5 336.0,327.0 C332.7,320.5 326.7,313.2 324.5,308.3 C322.3,303.4 323.9,301.0 322.7,297.3 C321.5,293.6 321.5,289.4 317.2,286.3 C312.9,283.2 301.8,282.3 297.0,279.0 C292.2,275.7 291.6,270.5 288.4,266.7 C285.2,262.9 281.3,259.5 277.8,256.0 C274.3,252.5 268.8,249.8 267.2,245.6 C265.7,241.4 268.5,231.0 268.5,231.0 C268.5,231.0 277.5,225.4 280.4,224.4 C283.3,223.3 283.7,224.9 286.0,224.7 C288.3,224.5 292.0,223.9 294.0,223.1 C296.0,222.3 298.0,220.0 298.0,220.0 C298.0,220.0 298.7,225.5 299.4,227.4 C300.1,229.2 299.2,229.8 302.0,231.1 C304.8,232.4 313.1,234.9 316.0,235.4 C318.9,235.9 319.7,234.3 319.7,234.3 C319.7,234.3 318.3,227.8 321.0,227.0 C323.7,226.2 331.5,230.0 336.0,229.5 C340.5,229.0 344.7,226.4 348.0,224.0 C351.3,221.6 355.6,215.0 355.6,215.0 C355.6,215.0 363.3,215.8 365.3,217.0 C367.3,218.2 366.7,219.7 367.4,222.0 C368.1,224.3 369.6,230.6 369.6,230.6 C369.6,230.6 372.8,231.2 376.0,231.6 C379.2,232.0 384.7,231.9 388.6,233.1 C392.5,234.3 396.2,237.4 399.6,238.6 C403.0,239.8 408.8,240.5 408.8,240.5 C408.8,240.5 409.1,235.9 407.9,233.1 C406.7,230.4 403.8,227.7 401.5,224.0 C399.2,220.3 396.2,216.0 394.1,211.1 C392.0,206.2 390.0,199.7 388.6,194.7 C387.2,189.7 388.3,184.4 385.9,180.9 C383.5,177.4 379.1,175.9 374.0,173.6 C368.9,171.3 362.3,168.9 355.6,167.2 C348.9,165.5 340.7,164.0 333.7,163.5 C326.7,163.0 319.9,163.3 313.5,164.4 C307.1,165.5 299.8,169.4 295.2,169.9 C290.6,170.4 286.0,167.2 286.0,167.2 C286.0,167.2 286.4,165.5 285.7,163.5 C285.0,161.5 283.1,160.2 281.8,155.3 C280.5,150.4 279.8,141.2 277.8,134.1 C275.8,127.0 273.4,119.1 269.9,112.9 C266.4,106.7 260.1,101.8 256.6,97.0 C253.1,92.2 252.5,88.9 248.7,83.8 C245.0,78.7 238.1,70.8 234.1,66.6 C230.1,62.4 228.9,60.8 224.9,58.6 C220.9,56.4 213.2,55.4 210.3,53.3 C207.4,51.2 207.6,46.2 207.6,46.2Z"/>
<path fill="#fff" d="M309.6,207.5 C311.4,205.9 314.4,203.2 318.0,201.6 C321.6,200.1 327.7,198.5 331.5,198.2 C335.3,197.9 337.9,198.7 340.6,200.0 C343.4,201.3 345.5,203.6 348.0,206.0 C350.5,208.4 355.1,211.8 355.6,214.5 C356.1,217.2 352.6,219.9 351.0,222.0 C349.4,224.1 348.5,225.8 346.0,227.0 C343.5,228.2 340.0,229.0 336.0,229.0 C332.0,229.0 325.7,229.2 322.0,227.0 C318.3,224.8 316.5,218.2 314.0,215.5 C311.5,212.8 307.7,212.3 307.0,211.0 C306.3,209.7 307.8,209.1 309.6,207.5Z"/>
<path fill="#000" d="M310.0,209.5 C310.0,209.5 313.6,211.7 316.0,211.5 C318.4,211.3 322.0,209.3 324.6,208.5 C327.2,207.7 328.9,206.8 331.5,206.5 C334.1,206.2 337.7,206.2 340.0,207.0 C342.3,207.8 343.2,208.6 345.5,211.0 C347.8,213.4 353.5,221.7 353.5,221.7 C353.5,221.7 354.0,223.9 352.5,222.5 C351.0,221.1 346.7,215.2 344.5,213.0 C342.3,210.8 341.7,210.1 339.5,209.5 C337.3,208.9 334.0,209.0 331.5,209.5 C329.0,210.0 327.2,211.4 324.6,212.3 C322.0,213.2 318.5,215.2 316.0,215.2 C313.5,215.1 310.5,212.9 309.5,212.0 C308.5,211.1 310.0,209.5 310.0,209.5Z"/>
<ellipse fill="#000" cx="335.5" cy="218" rx="10.5" ry="11"/>
<path fill="#000" d="M297.8,219.9 C297.8,219.9 300.0,220.8 303.7,222.0 C307.5,223.2 317.6,224.8 320.3,226.8 C323.0,228.9 319.7,234.3 319.7,234.3 C319.7,234.3 318.9,235.9 316.0,235.4 C313.1,234.9 304.8,232.4 302.0,231.1 C299.2,229.8 300.1,229.3 299.4,227.4 C298.7,225.5 297.8,219.9 297.8,219.9Z"/>
<path fill="#000" d="M404.6,196.2 C404.6,196.2 406.2,186.5 409.5,182.7 C412.8,178.9 420.1,176.4 424.5,173.4 C428.9,170.4 435.9,164.8 435.9,164.8 C435.9,164.8 431.0,173.6 430.2,177.7 C429.4,181.8 430.8,185.4 430.9,189.1 C431.0,192.8 431.6,197.0 430.9,199.8 C430.2,202.7 426.6,206.2 426.6,206.2 C426.6,206.2 427.0,199.4 425.9,197.0 C424.8,194.6 422.5,192.6 420.2,191.9 C418.0,191.2 415.0,191.9 412.4,192.6 C409.8,193.3 404.6,196.2 404.6,196.2Z"/>
<ellipse fill="#000" cx="417.5" cy="209.2" rx="8" ry="10" transform="rotate(-10 417.5 209.2)"/>
<circle fill="#fff" cx="412" cy="208" r="1.3"/>
<circle fill="#000" cx="418.29999999999995" cy="257.9" r="2"/>
<path fill="#000" d="M383.1,271.6 C385.2,268.9 392.0,267.4 396.0,268.0 C400.0,268.6 403.3,273.5 407.0,275.3 C410.7,277.1 414.0,278.9 418.0,279.0 C422.0,279.1 426.8,275.9 430.8,276.2 C434.8,276.5 438.1,278.8 441.8,280.8 C445.5,282.8 452.8,288.1 452.8,288.1 C452.8,288.1 448.9,291.3 445.5,293.6 C442.1,295.9 436.0,301.0 432.6,301.9 C429.2,302.8 427.1,300.8 425.3,299.1 C423.5,297.4 423.4,293.0 421.6,291.8 C419.8,290.6 416.1,290.9 414.3,291.8 C412.5,292.7 413.1,296.1 410.6,297.3 C408.2,298.5 403.3,299.7 399.6,299.1 C395.9,298.5 391.4,296.0 388.6,293.6 C385.9,291.2 384.0,288.2 383.1,284.5 C382.2,280.8 381.0,274.4 383.1,271.6Z"/>
<ellipse fill="#fff" cx="427" cy="290" rx="3" ry="1.3"/>
<path fill="#000" d="M381.0,339.2 C382.2,337.0 384.4,336.2 387.1,336.2 C389.8,336.2 393.9,338.0 397.3,339.2 C400.7,340.4 402.4,343.3 407.5,343.3 C412.6,343.3 421.0,340.4 427.8,339.2 C434.6,338.0 443.8,336.7 448.2,336.2 C452.6,335.7 454.3,336.2 454.3,336.2 C454.3,336.2 455.7,340.9 452.3,342.3 C448.9,343.6 440.1,342.9 434.0,344.3 C427.9,345.6 420.4,348.4 415.6,350.4 C410.8,352.4 406.1,354.1 405.4,356.5 C404.7,358.9 407.1,363.5 411.5,364.7 C415.9,365.9 425.1,364.4 431.9,363.7 C438.7,363.0 452.3,360.6 452.3,360.6 C452.3,360.6 452.3,364.0 448.2,365.7 C444.1,367.4 433.9,369.3 427.8,370.8 C421.7,372.3 415.9,373.5 411.5,374.9 C407.1,376.2 404.4,378.9 401.4,378.9 C398.3,378.9 395.3,376.8 393.2,374.9 C391.2,373.0 391.1,369.8 389.1,367.7 C387.1,365.7 383.5,363.6 381.0,362.6 C378.5,361.6 373.9,361.6 373.9,361.6 C373.9,361.6 373.9,355.5 374.9,353.5 C375.9,351.5 379.0,351.8 380.0,349.4 C381.0,347.0 379.8,341.4 381.0,339.2Z"/>
<path fill="none" stroke="#dcdcdc" stroke-width="0.8" stroke-dasharray="0.8 2.6" d="M207.6,46.2 C207.6,46.2 240.1,32.4 256.0,30.5 C271.9,28.6 285.0,28.8 303.0,35.0 C321.0,41.2 346.8,55.5 364.0,68.0 C381.2,80.5 394.0,94.5 406.0,110.0 C418.0,125.5 430.3,147.0 436.0,161.0 C441.7,175.0 438.5,184.3 440.0,194.0 C441.5,203.7 442.2,209.5 445.0,219.0 C447.8,228.5 454.5,239.5 457.0,251.0 C459.5,262.5 459.2,270.2 460.0,288.0 C460.8,305.8 460.8,334.5 462.0,358.0 C463.2,381.5 465.5,416.5 467.0,429.0 C468.5,441.5 471.0,433.0 471.0,433.0"/></svg>
<div class="a" style="left:841px;top:107px;width:393px;height:190px;border-radius:5px;box-shadow:0 18px 45px rgba(0,0,0,.8), 0 0 0 1px rgba(0,0,0,.3);background:#ececec;overflow:hidden">
<div class="a" style="left:0;top:0;width:393px;height:22px;background:linear-gradient(#e9e9e9,#c2c2c2);border-bottom:1px solid #6e6e6e"></div>
<div class="t" style="left:0px;top:5.00px;font-size:13.8px;color:#3a3a3a;width:393px;text-align:center;">Threshold</div>
</div>
<div class="t" style="left:907.5px;top:146.00px;font-size:13.8px;color:#111;">Threshold Level:</div>
<div class="a" style="left:1015px;top:139px;width:45px;height:25px;background:#fff;border:1px solid #9a9a9a;box-shadow:inset 0 1px 1px rgba(0,0,0,.2)"></div>
<div class="a" style="left:1018px;top:143px;width:27px;height:17px;background:#b3cdf6"></div>
<div class="t" style="left:1019.5px;top:146.00px;font-size:13.8px;color:#111;">195</div>
<div class="a" style="left:1137px;top:142px;width:81px;height:21px;border-radius:4px;border:1px solid #4d6fa6;background:linear-gradient(#d3e5fb,#a7c8f3 50%,#8ab5ee 51%,#c0dcfb)"></div>
<div class="t" style="left:1137px;top:146.00px;font-size:13.3px;color:#111;width:81px;text-align:center;">OK</div>
<div class="a" style="left:1137px;top:176px;width:81px;height:21px;border-radius:4px;border:1px solid #9a9a9a;background:linear-gradient(#ffffff,#f1f1f1 50%,#e4e4e4 51%,#f7f7f7)"></div>
<div class="t" style="left:1137px;top:180.00px;font-size:13.3px;color:#111;width:81px;text-align:center;">Cancel</div>
<div class="a" style="left:1133px;top:214px;width:14px;height:14px;border-radius:3px;border:1px solid #6a7fa0;background:linear-gradient(#c4d6ee,#a4bde2)"></div>
<svg class="a" style="left:1134px;top:210px" width="16" height="18" viewBox="0 0 16 18"><path d="M2.3 8.5 7 15.6 13.5 3" fill="none" stroke="#0f1a30" stroke-width="2.8" stroke-linejoin="miter"/></svg>
<div class="t" style="left:1151.3px;top:215.00px;font-size:13.2px;color:#111;">Preview</div>
<div class="a" style="left:855px;top:173px;width:257px;height:102px;background:#fafafa;border:1px solid #a8a8a8"></div>
<svg class="a" style="left:855px;top:172px" width="257" height="103" viewBox="0 0 257 103"><polygon fill="#222" points="1.50,75.00 2.00,75.00 2.00,79.00 2.50,79.00 2.50,83.00 3.00,83.00 3.00,82.60 3.50,82.60 3.50,80.97 4.00,80.97 4.00,79.36 4.50,79.36 4.50,82.46 5.00,82.46 5.00,78.01 5.50,78.01 5.50,81.15 6.00,81.15 6.00,79.86 6.50,79.86 6.50,77.61 7.00,77.61 7.00,80.65 7.50,80.65 7.50,77.26 8.00,77.26 8.00,79.54 8.50,79.54 8.50,76.49 9.00,76.49 9.00,76.13 9.50,76.13 9.50,77.97 10.00,77.97 10.00,80.29 10.50,80.29 10.50,74.87 11.00,74.87 11.00,75.06 11.50,75.06 11.50,77.39 12.00,77.39 12.00,79.13 12.50,79.13 12.50,76.04 13.00,76.04 13.00,72.28 13.50,72.28 13.50,73.83 14.00,73.83 14.00,64.83 14.50,64.83 14.50,68.01 15.00,68.01 15.00,61.53 15.50,61.53 15.50,59.01 16.00,59.01 16.00,57.32 16.50,57.32 16.50,60.66 17.00,60.66 17.00,66.21 17.50,66.21 17.50,58.27 18.00,58.27 18.00,57.57 18.50,57.57 18.50,54.47 19.00,54.47 19.00,51.91 19.50,51.91 19.50,55.23 20.00,55.23 20.00,53.94 20.50,53.94 20.50,54.32 21.00,54.32 21.00,55.74 21.50,55.74 21.50,61.26 22.00,61.26 22.00,63.49 22.50,63.49 22.50,61.20 23.00,61.20 23.00,61.60 23.50,61.60 23.50,61.17 24.00,61.17 24.00,60.60 24.50,60.60 24.50,64.56 25.00,64.56 25.00,64.39 25.50,64.39 25.50,62.46 26.00,62.46 26.00,66.02 26.50,66.02 26.50,66.93 27.00,66.93 27.00,70.63 27.50,70.63 27.50,67.61 28.00,67.61 28.00,62.52 28.50,62.52 28.50,68.05 29.00,68.05 29.00,62.70 29.50,62.70 29.50,65.49 30.00,65.49 30.00,68.55 30.50,68.55 30.50,65.63 31.00,65.63 31.00,69.30 31.50,69.30 31.50,67.46 32.00,67.46 32.00,73.18 32.50,73.18 32.50,71.85 33.00,71.85 33.00,68.51 33.50,68.51 33.50,71.57 34.00,71.57 34.00,68.57 34.50,68.57 34.50,72.18 35.00,72.18 35.00,72.41 35.50,72.41 35.50,73.37 36.00,73.37 36.00,73.57 36.50,73.57 36.50,77.32 37.00,77.32 37.00,79.11 37.50,79.11 37.50,73.82 38.00,73.82 38.00,73.15 38.50,73.15 38.50,69.80 39.00,69.80 39.00,75.16 39.50,75.16 39.50,75.65 40.00,75.65 40.00,78.95 40.50,78.95 40.50,78.63 41.00,78.63 41.00,75.74 41.50,75.74 41.50,77.33 42.00,77.33 42.00,80.18 42.50,80.18 42.50,73.66 43.00,73.66 43.00,74.73 43.50,74.73 43.50,73.43 44.00,73.43 44.00,73.82 44.50,73.82 44.50,74.16 45.00,74.16 45.00,79.88 45.50,79.88 45.50,76.16 46.00,76.16 46.00,77.73 46.50,77.73 46.50,79.49 47.00,79.49 47.00,83.60 47.50,83.60 47.50,76.06 48.00,76.06 48.00,76.64 48.50,76.64 48.50,77.91 49.00,77.91 49.00,80.81 49.50,80.81 49.50,80.92 50.00,80.92 50.00,81.80 50.50,81.80 50.50,78.39 51.00,78.39 51.00,80.03 51.50,80.03 51.50,80.32 52.00,80.32 52.00,84.69 52.50,84.69 52.50,83.20 53.00,83.20 53.00,75.56 53.50,75.56 53.50,76.67 54.00,76.67 54.00,78.00 54.50,78.00 54.50,78.95 55.00,78.95 55.00,81.64 55.50,81.64 55.50,82.69 56.00,82.69 56.00,80.71 56.50,80.71 56.50,79.22 57.00,79.22 57.00,82.43 57.50,82.43 57.50,80.08 58.00,80.08 58.00,79.46 58.50,79.46 58.50,82.55 59.00,82.55 59.00,81.08 59.50,81.08 59.50,80.23 60.00,80.23 60.00,81.32 60.50,81.32 60.50,80.86 61.00,80.86 61.00,75.63 61.50,75.63 61.50,80.67 62.00,80.67 62.00,78.96 62.50,78.96 62.50,81.12 63.00,81.12 63.00,82.09 63.50,82.09 63.50,78.75 64.00,78.75 64.00,78.29 64.50,78.29 64.50,75.72 65.00,75.72 65.00,78.94 65.50,78.94 65.50,73.94 66.00,73.94 66.00,72.97 66.50,72.97 66.50,72.96 67.00,72.96 67.00,71.64 67.50,71.64 67.50,74.38 68.00,74.38 68.00,73.87 68.50,73.87 68.50,73.44 69.00,73.44 69.00,74.43 69.50,74.43 69.50,74.02 70.00,74.02 70.00,75.80 70.50,75.80 70.50,72.49 71.00,72.49 71.00,77.50 71.50,77.50 71.50,74.74 72.00,74.74 72.00,70.54 72.50,70.54 72.50,72.77 73.00,72.77 73.00,74.93 73.50,74.93 73.50,74.61 74.00,74.61 74.00,72.48 74.50,72.48 74.50,77.13 75.00,77.13 75.00,77.70 75.50,77.70 75.50,72.70 76.00,72.70 76.00,71.51 76.50,71.51 76.50,67.41 77.00,67.41 77.00,66.22 77.50,66.22 77.50,69.90 78.00,69.90 78.00,71.35 78.50,71.35 78.50,74.68 79.00,74.68 79.00,69.38 79.50,69.38 79.50,67.79 80.00,67.79 80.00,73.66 80.50,73.66 80.50,69.07 81.00,69.07 81.00,64.78 81.50,64.78 81.50,65.93 82.00,65.93 82.00,60.69 82.50,60.69 82.50,64.98 83.00,64.98 83.00,68.92 83.50,68.92 83.50,68.90 84.00,68.90 84.00,68.97 84.50,68.97 84.50,67.63 85.00,67.63 85.00,70.07 85.50,70.07 85.50,68.47 86.00,68.47 86.00,72.50 86.50,72.50 86.50,70.09 87.00,70.09 87.00,70.52 87.50,70.52 87.50,66.09 88.00,66.09 88.00,64.06 88.50,64.06 88.50,67.43 89.00,67.43 89.00,67.89 89.50,67.89 89.50,66.22 90.00,66.22 90.00,65.14 90.50,65.14 90.50,67.73 91.00,67.73 91.00,69.68 91.50,69.68 91.50,67.75 92.00,67.75 92.00,71.46 92.50,71.46 92.50,71.99 93.00,71.99 93.00,71.20 93.50,71.20 93.50,72.70 94.00,72.70 94.00,75.96 94.50,75.96 94.50,77.31 95.00,77.31 95.00,81.85 95.50,81.85 95.50,83.95 96.00,83.95 96.00,80.63 96.50,80.63 96.50,84.31 97.00,84.31 97.00,84.92 97.50,84.92 97.50,84.94 98.00,84.94 98.00,81.05 98.50,81.05 98.50,80.29 99.00,80.29 99.00,80.59 99.50,80.59 99.50,80.63 100.00,80.63 100.00,80.93 100.50,80.93 100.50,84.12 101.00,84.12 101.00,86.30 101.50,86.30 101.50,86.13 102.00,86.13 102.00,83.86 102.50,83.86 102.50,85.32 103.00,85.32 103.00,86.60 103.50,86.60 103.50,81.84 104.00,81.84 104.00,86.12 104.50,86.12 104.50,88.12 105.00,88.12 105.00,87.48 105.50,87.48 105.50,87.00 106.00,87.00 106.00,84.85 106.50,84.85 106.50,82.50 107.00,82.50 107.00,86.52 107.50,86.52 107.50,83.08 108.00,83.08 108.00,86.11 108.50,86.11 108.50,87.05 109.00,87.05 109.00,82.77 109.50,82.77 109.50,82.56 110.00,82.56 110.00,86.13 110.50,86.13 110.50,83.57 111.00,83.57 111.00,78.69 111.50,78.69 111.50,77.39 112.00,77.39 112.00,76.56 112.50,76.56 112.50,80.83 113.00,80.83 113.00,77.00 113.50,77.00 113.50,76.00 114.00,76.00 114.00,69.56 114.50,69.56 114.50,57.69 115.00,57.69 115.00,45.81 115.50,45.81 115.50,33.94 116.00,33.94 116.00,20.08 116.50,20.08 116.50,4.25 117.00,4.25 117.00,4.25 117.50,4.25 117.50,4.25 118.00,4.25 118.00,4.25 118.50,4.25 118.50,4.25 119.00,4.25 119.00,4.25 119.50,4.25 119.50,4.25 120.00,4.25 120.00,4.25 120.50,4.25 120.50,4.25 121.00,4.25 121.00,4.25 121.50,4.25 121.50,4.25 122.00,4.25 122.00,4.25 122.50,4.25 122.50,4.25 123.00,4.25 123.00,4.25 123.50,4.25 123.50,4.25 124.00,4.25 124.00,13.83 124.50,13.83 124.50,33.00 125.00,33.00 125.00,95.50 125.50,95.50 125.50,95.50 126.00,95.50 126.00,95.50 126.50,95.50 126.50,95.99 127.00,95.99 127.00,94.93 127.50,94.93 127.50,96.02 128.00,96.02 128.00,96.27 128.50,96.27 128.50,95.75 129.00,95.75 129.00,95.26 129.50,95.26 129.50,95.58 130.00,95.58 130.00,94.91 130.50,94.91 130.50,94.72 131.00,94.72 131.00,96.25 131.50,96.25 131.50,95.74 132.00,95.74 132.00,95.54 132.50,95.54 132.50,96.19 133.00,96.19 133.00,95.39 133.50,95.39 133.50,96.09 134.00,96.09 134.00,96.02 134.50,96.02 134.50,95.04 135.00,95.04 135.00,95.10 135.50,95.10 135.50,95.17 136.00,95.17 136.00,95.08 136.50,95.08 136.50,95.64 137.00,95.64 137.00,95.11 137.50,95.11 137.50,95.37 138.00,95.37 138.00,94.96 138.50,94.96 138.50,96.26 139.00,96.26 139.00,95.42 139.50,95.42 139.50,95.63 140.00,95.63 140.00,95.88 140.50,95.88 140.50,96.45 141.00,96.45 141.00,95.72 141.50,95.72 141.50,96.57 142.00,96.57 142.00,95.95 142.50,95.95 142.50,96.05 143.00,96.05 143.00,96.09 143.50,96.09 143.50,95.33 144.00,95.33 144.00,96.05 144.50,96.05 144.50,95.69 145.00,95.69 145.00,95.46 145.50,95.46 145.50,96.78 146.00,96.78 146.00,95.83 146.50,95.83 146.50,96.36 147.00,96.36 147.00,96.81 147.50,96.81 147.50,96.59 148.00,96.59 148.00,96.27 148.50,96.27 148.50,96.63 149.00,96.63 149.00,96.74 149.50,96.74 149.50,97.15 150.00,97.15 150.00,96.12 150.50,96.12 150.50,96.82 151.00,96.82 151.00,96.30 151.50,96.30 151.50,96.32 152.00,96.32 152.00,97.09 152.50,97.09 152.50,96.64 153.00,96.64 153.00,96.70 153.50,96.70 153.50,96.99 154.00,96.99 154.00,97.21 154.50,97.21 154.50,96.43 155.00,96.43 155.00,96.68 155.50,96.68 155.50,96.48 156.00,96.48 156.00,96.47 156.50,96.47 156.50,96.73 157.00,96.73 157.00,96.32 157.50,96.32 157.50,96.43 158.00,96.43 158.00,96.31 158.50,96.31 158.50,97.03 159.00,97.03 159.00,96.62 159.50,96.62 159.50,96.88 160.00,96.88 160.00,96.96 160.50,96.96 160.50,95.84 161.00,95.84 161.00,96.30 161.50,96.30 161.50,96.88 162.00,96.88 162.00,96.69 162.50,96.69 162.50,95.54 163.00,95.54 163.00,95.49 163.50,95.49 163.50,95.98 164.00,95.98 164.00,95.37 164.50,95.37 164.50,95.61 165.00,95.61 165.00,95.32 165.50,95.32 165.50,96.25 166.00,96.25 166.00,96.40 166.50,96.40 166.50,96.56 167.00,96.56 167.00,95.35 167.50,95.35 167.50,96.22 168.00,96.22 168.00,96.11 168.50,96.11 168.50,95.25 169.00,95.25 169.00,96.41 169.50,96.41 169.50,96.52 170.00,96.52 170.00,95.30 170.50,95.30 170.50,96.45 171.00,96.45 171.00,95.54 171.50,95.54 171.50,95.65 172.00,95.65 172.00,96.43 172.50,96.43 172.50,96.16 173.00,96.16 173.00,95.06 173.50,95.06 173.50,95.47 174.00,95.47 174.00,95.57 174.50,95.57 174.50,95.27 175.00,95.27 175.00,95.01 175.50,95.01 175.50,95.23 176.00,95.23 176.00,95.91 176.50,95.91 176.50,94.81 177.00,94.81 177.00,95.69 177.50,95.69 177.50,95.53 178.00,95.53 178.00,94.88 178.50,94.88 178.50,95.41 179.00,95.41 179.00,95.90 179.50,95.90 179.50,95.74 180.00,95.74 180.00,95.05 180.50,95.05 180.50,96.55 181.00,96.55 181.00,96.26 181.50,96.26 181.50,96.58 182.00,96.58 182.00,95.22 182.50,95.22 182.50,95.50 183.00,95.50 183.00,95.16 183.50,95.16 183.50,96.37 184.00,96.37 184.00,95.58 184.50,95.58 184.50,95.38 185.00,95.38 185.00,95.88 185.50,95.88 185.50,96.68 186.00,96.68 186.00,96.56 186.50,96.56 186.50,95.69 187.00,95.69 187.00,95.54 187.50,95.54 187.50,96.80 188.00,96.80 188.00,96.26 188.50,96.26 188.50,96.50 189.00,96.50 189.00,95.54 189.50,95.54 189.50,95.52 190.00,95.52 190.00,96.55 190.50,96.55 190.50,96.16 191.00,96.16 191.00,95.62 191.50,95.62 191.50,97.03 192.00,97.03 192.00,96.57 192.50,96.57 192.50,96.86 193.00,96.86 193.00,95.73 193.50,95.73 193.50,96.99 194.00,96.99 194.00,95.76 194.50,95.76 194.50,97.06 195.00,97.06 195.00,96.43 195.50,96.43 195.50,96.27 196.00,96.27 196.00,96.63 196.50,96.63 196.50,97.26 197.00,97.26 197.00,96.23 197.50,96.23 197.50,96.03 198.00,96.03 198.00,96.69 198.50,96.69 198.50,96.26 199.00,96.26 199.00,96.08 199.50,96.08 199.50,96.18 200.00,96.18 200.00,96.03 200.50,96.03 200.50,96.24 201.00,96.24 201.00,96.38 201.50,96.38 201.50,96.33 202.00,96.33 202.00,97.03 202.50,97.03 202.50,96.24 203.00,96.24 203.00,96.54 203.50,96.54 203.50,95.99 204.00,95.99 204.00,96.23 204.50,96.23 204.50,95.66 205.00,95.66 205.00,96.00 205.50,96.00 205.50,95.59 206.00,95.59 206.00,96.70 206.50,96.70 206.50,96.38 207.00,96.38 207.00,95.76 207.50,95.76 207.50,96.18 208.00,96.18 208.00,96.89 208.50,96.89 208.50,95.53 209.00,95.53 209.00,96.63 209.50,96.63 209.50,95.98 210.00,95.98 210.00,96.04 210.50,96.04 210.50,96.55 211.00,96.55 211.00,95.81 211.50,95.81 211.50,95.96 212.00,95.96 212.00,96.21 212.50,96.21 212.50,96.65 213.00,96.65 213.00,95.59 213.50,95.59 213.50,96.34 214.00,96.34 214.00,96.10 214.50,96.10 214.50,95.95 215.00,95.95 215.00,95.55 215.50,95.55 215.50,95.42 216.00,95.42 216.00,94.92 216.50,94.92 216.50,95.00 217.00,95.00 217.00,94.87 217.50,94.87 217.50,95.91 218.00,95.91 218.00,95.10 218.50,95.10 218.50,94.92 219.00,94.92 219.00,94.76 219.50,94.76 219.50,95.93 220.00,95.93 220.00,95.94 220.50,95.94 220.50,95.59 221.00,95.59 221.00,94.93 221.50,94.93 221.50,94.83 222.00,94.83 222.00,94.88 222.50,94.88 222.50,95.11 223.00,95.11 223.00,94.59 223.50,94.59 223.50,95.02 224.00,95.02 224.00,94.69 224.50,94.69 224.50,95.77 225.00,95.77 225.00,95.76 225.50,95.76 225.50,95.02 226.00,95.02 226.00,94.49 226.50,94.49 226.50,95.59 227.00,95.59 227.00,94.48 227.50,94.48 227.50,94.51 228.00,94.51 228.00,93.89 228.50,93.89 228.50,94.44 229.00,94.44 229.00,94.54 229.50,94.54 229.50,94.53 230.00,94.53 230.00,94.00 230.50,94.00 230.50,94.43 231.00,94.43 231.00,93.58 231.50,93.58 231.50,93.94 232.00,93.94 232.00,93.61 232.50,93.61 232.50,94.05 233.00,94.05 233.00,93.42 233.50,93.42 233.50,93.34 234.00,93.34 234.00,93.74 234.50,93.74 234.50,93.57 235.00,93.57 235.00,94.08 235.50,94.08 235.50,93.94 236.00,93.94 236.00,94.24 236.50,94.24 236.50,94.04 237.00,94.04 237.00,94.08 237.50,94.08 237.50,94.29 238.00,94.29 238.00,93.45 238.50,93.45 238.50,93.30 239.00,93.30 239.00,94.30 239.50,94.30 239.50,92.91 240.00,92.91 240.00,93.78 240.50,93.78 240.50,93.60 241.00,93.60 241.00,92.59 241.50,92.59 241.50,93.80 242.00,93.80 242.00,93.84 242.50,93.84 242.50,93.36 243.00,93.36 243.00,93.48 243.50,93.48 243.50,93.55 244.00,93.55 244.00,93.00 244.50,93.00 244.50,90.00 245.00,90.00 245.00,87.00 245.50,87.00 245.50,84.00 246.00,84.00 246.00,81.00 246.50,81.00 246.50,78.00 247.00,78.00 247.00,69.67 247.50,69.67 247.50,61.33 248.00,61.33 248.00,53.00 248.50,53.00 248.50,45.00 249.00,45.00 249.00,37.00 249.50,37.00 249.50,33.50 250.00,33.50 250.00,34.50 250.50,34.50 250.50,35.50 251.00,35.50 251.00,36.50 251.50,36.50 251.50,37.50 252.00,37.50 252.00,40.75 252.50,40.75 252.50,46.25 253.00,46.25 253.00,51.75 253.50,51.75 253.50,19.25 254.00,19.25 254.00,3.00 254.50,3.00 254.50,3.00 255.00,3.00 255,101 1.5,101"/></svg>
<svg class="a" style="left:1043px;top:275px" width="13" height="11" viewBox="0 0 13 11"><path d="M1.5 9.5 C1 9 1 8 2 7 L5.5 2 C6 1.3 7 1.3 7.5 2 L11 7 C12 8 12 9 11.5 9.5 Z" fill="#cdcdcd" stroke="#6f6f6f" stroke-width="1"/></svg>
<div class="a" style="left:1310px;top:34px;width:370px;height:12px;background:linear-gradient(#959595,#838383)"></div>
<div class="a" style="left:1310px;top:46px;width:37px;height:936px;background:#d6d6d6"></div>
<div class="a" style="left:1310px;top:46px;width:37px;height:40px;background:#d6d6d6;border-top:1px solid #e6e6e6;border-bottom:1px solid #7a7a7a"></div>
<div class="grip" style="left:1319px;top:49px;width:20px"></div>
<svg class="a" style="left:1321px;top:60px" width="16" height="18" viewBox="0 0 16 18"><path d="M5 .7 9.3 3v5L5 10.3.7 8V3z" fill="#8a8a8a" stroke="#222" stroke-width="1.1"/><path d="M.9 3.1 5 5.3 9.1 3.1 5 .9z" fill="#c8c8c8"/><path d="M.7 3 5 5.3 9.3 3M5 5.3v5" fill="none" stroke="#222" stroke-width="1.1"/><rect x="11.5" y="1" width="3" height="3" fill="none" stroke="#222"/><rect x="11.5" y="6" width="3" height="3" fill="none" stroke="#222"/><rect x=".5" y="12.5" width="14.5" height="4" fill="none" stroke="#222"/><path d="M10.5 12.5v4" stroke="#222"/></svg>
<div class="a" style="left:1347px;top:46px;width:3px;height:936px;background:linear-gradient(90deg,#7a7a7a,#606060 50%,#7a7a7a)"></div>
<div class="a" style="left:1336px;top:37px;width:0;height:0;border-top:3px solid transparent;border-bottom:3px solid transparent;border-right:4px solid #3a3a3a"></div><div class="a" style="left:1340px;top:37px;width:0;height:0;border-top:3px solid transparent;border-bottom:3px solid transparent;border-right:4px solid #3a3a3a"></div>
<div class="a" style="left:1588px;top:37px;width:0;height:0;border-top:3px solid transparent;border-bottom:3px solid transparent;border-left:4px solid #3a3a3a"></div><div class="a" style="left:1592px;top:37px;width:0;height:0;border-top:3px solid transparent;border-bottom:3px solid transparent;border-left:4px solid #3a3a3a"></div>
<div class="a" style="left:1627px;top:37px;width:0;height:0;border-top:3px solid transparent;border-bottom:3px solid transparent;border-right:4px solid #3a3a3a"></div><div class="a" style="left:1631px;top:37px;width:0;height:0;border-top:3px solid transparent;border-bottom:3px solid transparent;border-right:4px solid #3a3a3a"></div>
<div class="a" style="left:1668px;top:37px;width:0;height:0;border-top:3px solid transparent;border-bottom:3px solid transparent;border-right:4px solid #3a3a3a"></div><div class="a" style="left:1672px;top:37px;width:0;height:0;border-top:3px solid transparent;border-bottom:3px solid transparent;border-right:4px solid #3a3a3a"></div>
<div class="a" style="left:1350px;top:46px;width:249px;height:17px;background:linear-gradient(#8f8f8f,#9c9c9c)"></div>
<div class="a" style="left:1350px;top:46px;width:43px;height:17px;background:#d9d9d9;border-top:1px solid #ececec"></div>
<div class="a" style="left:1393px;top:46px;width:47px;height:17px;background:linear-gradient(#a5a5a5,#b0b0b0);border-left:1px solid #808080;border-right:1px solid #808080"></div>
<div class="t" style="left:1357.6px;top:50.00px;font-size:9.6px;color:#1d1d1d;">Layers</div>
<div class="t" style="left:1400.4px;top:50.00px;font-size:9.7px;color:#2a2a2a;letter-spacing:0.45px">History</div>
<div class="a" style="left:1581px;top:53px;width:0;height:0;border-left:3px solid transparent;border-right:3px solid transparent;border-top:3px solid #333"></div><div class="a" style="left:1587px;top:51px;width:8px;height:8px;background:repeating-linear-gradient(180deg,#333 0 1px,transparent 1px 2px)"></div>
<div class="a" style="left:1350px;top:63px;width:249px;height:675px;background:#d6d6d6"></div>
<div class="a" style="left:1354px;top:68px;width:64px;height:17px;background:linear-gradient(#ffffff,#f1f1f1);border:1px solid #8c8c8c;border-radius:3px"></div><div class="t" style="left:1375.5px;top:72.00px;font-size:9.4px;color:#111;">Kind</div><div class="a" style="left:1409px;top:71px;width:0;height:0;border-left:3px solid transparent;border-right:3px solid transparent;border-bottom:4px solid #333"></div><div class="a" style="left:1409px;top:78px;width:0;height:0;border-left:3px solid transparent;border-right:3px solid transparent;border-top:4px solid #333"></div>
<svg class="a" style="left:1361px;top:71px" width="11" height="11" viewBox="0 0 11 11"><circle cx="6.5" cy="4.5" r="3.3" fill="none" stroke="#222" stroke-width="1.5"/><path d="M4.2 6.8 1 10" stroke="#222" stroke-width="2" stroke-linecap="round"/></svg>
<svg class="a" style="left:1428px;top:70px" width="15" height="13" viewBox="0 0 15 13"><rect x="1.5" y="1.5" width="12" height="10" fill="#eaeaea" stroke="#1e1e1e" stroke-width="1.2"/><path d="M2.5 10.5 5.5 6.8 7.5 8.8 9.3 7.5 12.5 10.5z" fill="#222"/><circle cx="10.8" cy="4" r="1.1" fill="#222"/></svg>
<svg class="a" style="left:1453px;top:70px" width="12" height="12" viewBox="0 0 12 12"><circle cx="6" cy="6" r="4.8" fill="#e8e8e8" stroke="#1e1e1e" stroke-width="1.3"/><path d="M6 1.2a4.8 4.8 0 0 0 0 9.6z" fill="#1e1e1e" transform="rotate(35 6 6)"/></svg>
<svg class="a" style="left:1478px;top:71px" width="11" height="11" viewBox="0 0 11 11"><path d="M.3.3h10.4v3.2h-.8C9.6 2 9.2 1.4 8 1.4H6.4v8c0 .5.3.6 1.3.6v.8H3.3V10c1 0 1.3-.1 1.3-.6v-8H3C1.8 1.4 1.4 2 1.1 3.5H.3z" fill="#1e1e1e"/></svg>
<svg class="a" style="left:1502px;top:71px" width="12" height="12" viewBox="0 0 12 12"><rect x="1.5" y="1.5" width="9" height="9" fill="none" stroke="#1e1e1e" stroke-width="1.1"/><g fill="#eee" stroke="#1e1e1e" stroke-width="1"><circle cx="1.5" cy="1.5" r="1.1"/><circle cx="10.5" cy="1.5" r="1.1"/><circle cx="1.5" cy="10.5" r="1.1"/><circle cx="10.5" cy="10.5" r="1.1"/></g></svg>
<svg class="a" style="left:1525px;top:70px" width="13" height="13" viewBox="0 0 13 13"><path d="M4.5.6h5l2.5 2.5v7.3H4.5z" fill="#eee" stroke="#1e1e1e" stroke-width="1.1"/><path d="M9.5.6v2.5H12" fill="none" stroke="#1e1e1e" stroke-width=".9"/><rect x=".6" y="6.6" width="5" height="5.5" fill="#eee" stroke="#1e1e1e" stroke-width="1.1"/><rect x="5.2" y="5" width="3.8" height="3.8" fill="#1e1e1e"/></svg>
<div class="a" style="left:1551px;top:68px;width:9px;height:17px;border-radius:1px;background:linear-gradient(#fafafa,#e2e2e2 47%,#a9a9a9 47%,#b4b4b4);border:1px solid #a0a0a0"></div>
<div class="a" style="left:1350px;top:90px;width:249px;height:1px;background:#a8a8a8"></div>
<div class="a" style="left:1354px;top:96px;width:115px;height:17px;background:linear-gradient(#ffffff,#f1f1f1);border:1px solid #8c8c8c;border-radius:3px"></div><div class="t" style="left:1361.7px;top:100.00px;font-size:9.5px;color:#111;">Normal</div><div class="a" style="left:1460px;top:99px;width:0;height:0;border-left:3px solid transparent;border-right:3px solid transparent;border-bottom:4px solid #333"></div><div class="a" style="left:1460px;top:106px;width:0;height:0;border-left:3px solid transparent;border-right:3px solid transparent;border-top:4px solid #333"></div>
<div class="t" style="left:1473.5px;top:100.00px;font-size:9.5px;color:#1d1d1d;">Opacity:</div>
<div class="a" style="left:1512px;top:97px;width:48px;height:16px;background:#fff;border:1px solid #a0a0a0;border-radius:2px"></div><div class="a" style="left:1543px;top:97px;width:17px;height:16px;background:linear-gradient(#fafafa,#e8e8e8);border:1px solid #a0a0a0;border-radius:0 2px 2px 0"></div><div class="a" style="left:1549px;top:103px;width:0;height:0;border-left:3px solid transparent;border-right:3px solid transparent;border-top:3px solid #333"></div><div class="t" style="left:1516.8px;top:101.00px;font-size:8.9px;color:#1d1d1d;">100%</div>
<div class="a" style="left:1350px;top:118px;width:249px;height:1px;background:#a8a8a8"></div>
<div class="t" style="left:1355.6px;top:130.00px;font-size:9.3px;color:#1d1d1d;">Lock:</div>
<svg class="a" style="left:1384px;top:127px" width="12" height="12" viewBox="0 0 12 12"><rect x=".5" y=".5" width="11" height="11" fill="#fff" stroke="#333"/><g fill="#555"><rect x="1" y="1" width="2.5" height="2.5"/><rect x="6" y="1" width="2.5" height="2.5"/><rect x="3.5" y="3.5" width="2.5" height="2.5"/><rect x="8.5" y="3.5" width="2.5" height="2.5"/><rect x="1" y="6" width="2.5" height="2.5"/><rect x="6" y="6" width="2.5" height="2.5"/><rect x="3.5" y="8.5" width="2.5" height="2.5"/><rect x="8.5" y="8.5" width="2.5" height="2.5"/></g></svg>
<svg class="a" style="left:1404px;top:125px" width="17" height="16" viewBox="0 0 17 16"><path d="M16.5.5 8 9" stroke="#333" stroke-width="1.8"/><path d="M8.5 8.5c-2-1-4 0-4.5 2-.3 1.4-1.5 2.4-3.5 3 3.5 1.3 8 .8 8.5-2.5z" fill="#333"/></svg>
<svg class="a" style="left:1428px;top:126px" width="14" height="14" viewBox="0 0 14 14"><path d="M7 1v12M1 7h12" stroke="#222" stroke-width="1.4"/><path d="M7 0 4.5 3h5zM7 14l-2.5-3h5zM0 7l3-2.5v5zM14 7l-3-2.5v5z" fill="#222"/></svg>
<svg class="a" style="left:1452px;top:126px" width="10" height="14" viewBox="0 0 10 14"><path d="M2 6.5V4.5a3 3 0 0 1 6 0v2" fill="none" stroke="#222" stroke-width="1.6"/><rect x="0" y="6" width="10" height="8" rx="1" fill="#222"/><rect x="4.2" y="8.5" width="1.6" height="2.5" fill="#d6d6d6"/></svg>
<div class="t" style="left:1493.6px;top:129.00px;font-size:9.45px;color:#1d1d1d;">Fill:</div>
<div class="a" style="left:1512px;top:125px;width:48px;height:16px;background:#fff;border:1px solid #a0a0a0;border-radius:2px"></div><div class="a" style="left:1543px;top:125px;width:17px;height:16px;background:linear-gradient(#fafafa,#e8e8e8);border:1px solid #a0a0a0;border-radius:0 2px 2px 0"></div><div class="a" style="left:1549px;top:131px;width:0;height:0;border-left:3px solid transparent;border-right:3px solid transparent;border-top:3px solid #333"></div><div class="t" style="left:1516.8px;top:129.00px;font-size:8.9px;color:#1d1d1d;">100%</div>
<div class="a" style="left:1350px;top:146px;width:249px;height:1px;background:#a8a8a8"></div>
<div class="a" style="left:1381px;top:148px;width:204px;height:87px;background:#bdccf4"></div>
<div class="a" style="left:1350px;top:235px;width:235px;height:1px;background:#a9a9a9"></div>
<div class="a" style="left:1380px;top:148px;width:1px;height:87px;background:#b8b8b8"></div>
<svg class="a" style="left:1358px;top:187px" width="14" height="9" viewBox="0 0 14 9"><path d="M.5 4.5C2.5 1.5 4.5.5 7 .5s4.5 1 6.5 4c-2 3-4 4-6.5 4S2.5 7.5.5 4.5z" fill="#eee" stroke="#222" stroke-width="1"/><circle cx="7" cy="4.5" r="2.6" fill="#222"/></svg>
<div class="t" style="left:1472.4px;top:188.00px;font-size:9.5px;color:#1d1d1d;">Layer 1</div>
<div class="a" style="left:1350px;top:323px;width:235px;height:1px;background:#a9a9a9"></div>
<div class="a" style="left:1380px;top:236px;width:1px;height:87px;background:#b8b8b8"></div>
<svg class="a" style="left:1358px;top:275px" width="14" height="9" viewBox="0 0 14 9"><path d="M.5 4.5C2.5 1.5 4.5.5 7 .5s4.5 1 6.5 4c-2 3-4 4-6.5 4S2.5 7.5.5 4.5z" fill="#eee" stroke="#222" stroke-width="1"/><circle cx="7" cy="4.5" r="2.6" fill="#222"/></svg>
<div class="t" style="left:1472.4px;top:276.00px;font-size:9.5px;color:#1d1d1d;">Layer 2</div>
<div class="a" style="left:1350px;top:410px;width:235px;height:1px;background:#a9a9a9"></div>
<div class="a" style="left:1380px;top:323px;width:1px;height:87px;background:#b8b8b8"></div>
<svg class="a" style="left:1358px;top:362px" width="14" height="9" viewBox="0 0 14 9"><path d="M.5 4.5C2.5 1.5 4.5.5 7 .5s4.5 1 6.5 4c-2 3-4 4-6.5 4S2.5 7.5.5 4.5z" fill="#eee" stroke="#222" stroke-width="1"/><circle cx="7" cy="4.5" r="2.6" fill="#222"/></svg>
<div class="t" style="left:1472.4px;top:364.00px;font-size:9.6px;color:#1d1d1d;font-style:italic;">Background</div>
<div class="a" style="left:1384px;top:152px;width:80px;height:81px;border:1px solid #222;background-color:#fff;background-image:linear-gradient(45deg,#ccc 25%,transparent 25%,transparent 75%,#ccc 75%),linear-gradient(45deg,#ccc 25%,transparent 25%,transparent 75%,#ccc 75%);background-size:8px 8px;background-position:0 0,4px 4px"></div>
<svg class="a" style="left:1385px;top:153px" width="78" height="79" viewBox="0 0 672 667" preserveAspectRatio="none"><path fill="#fff" d="M207.6,46.2 C207.6,46.2 240.1,32.4 256.0,30.5 C271.9,28.6 285.0,28.8 303.0,35.0 C321.0,41.2 346.8,55.5 364.0,68.0 C381.2,80.5 394.0,94.5 406.0,110.0 C418.0,125.5 430.3,147.0 436.0,161.0 C441.7,175.0 438.5,184.3 440.0,194.0 C441.5,203.7 442.2,209.5 445.0,219.0 C447.8,228.5 454.5,239.5 457.0,251.0 C459.5,262.5 459.2,270.2 460.0,288.0 C460.8,305.8 460.8,334.5 462.0,358.0 C463.2,381.5 465.5,416.5 467.0,429.0 C468.5,441.5 471.0,433.0 471.0,433.0 C471.0,433.0 647.5,596.8 647.5,596.8 C647.5,596.8 672.0,607.0 672.0,607.0 C672.0,607.0 672.0,667.0 672.0,667.0 C672.0,667.0 96.0,667.0 96.0,667.0 C96.0,667.0 96.0,407.0 96.0,407.0 C96.0,407.0 207.6,46.2 207.6,46.2Z"/>
<path fill="#000" d="M207.6,46.2 C207.6,46.2 183.1,55.5 171.9,62.6 C160.6,69.7 149.8,79.7 140.1,89.0 C130.4,98.3 120.7,108.0 113.7,118.2 C106.6,128.4 101.6,138.5 97.8,150.0 C94.1,161.5 92.7,175.5 91.2,187.0 C89.6,198.5 88.8,208.8 88.5,218.8 C88.2,228.8 88.3,238.3 89.3,247.0 C90.3,255.7 92.6,262.4 94.6,270.8 C96.6,279.2 99.7,289.8 101.2,297.3 C102.7,304.8 102.3,308.7 103.8,315.8 C105.3,322.9 107.7,332.2 110.4,339.7 C113.0,347.2 118.4,354.2 119.7,360.8 C121.0,367.4 119.9,373.2 118.4,379.4 C116.8,385.6 112.8,393.7 110.4,397.9 C108.0,402.1 107.8,402.1 103.8,404.5 C99.8,406.9 93.0,409.2 86.6,412.5 C80.2,415.8 73.3,420.2 65.4,424.4 C57.5,428.6 47.4,433.2 39.0,437.6 C30.6,442.0 21.6,446.7 15.1,450.9 C8.6,455.1 -0.2,462.8 -0.2,462.8 C-0.2,462.8 -0.2,667.0 -0.2,667.0 C-0.2,667.0 614.5,667.0 614.5,667.0 C614.5,667.0 609.0,653.1 609.0,653.1 C609.0,653.1 618.2,643.7 622.8,638.0 C627.4,632.3 632.4,625.7 636.5,618.8 C640.6,611.9 647.5,596.8 647.5,596.8 C647.5,596.8 633.1,589.5 628.3,585.8 C623.5,582.1 620.9,583.0 618.6,574.8 C616.3,566.5 616.5,546.8 614.5,536.3 C612.5,525.8 609.5,519.3 606.3,511.5 C603.1,503.7 599.9,496.6 595.3,489.5 C590.7,482.4 584.8,474.6 578.8,468.9 C572.8,463.2 565.9,459.0 559.5,455.1 C553.1,451.2 546.2,448.0 540.3,445.5 C534.3,443.0 530.7,441.1 523.8,440.0 C516.9,438.9 507.9,439.8 499.0,438.6 C490.1,437.5 470.1,433.1 470.1,433.1 C470.1,433.1 469.6,432.9 469.6,432.9 C469.6,432.9 468.1,441.7 464.5,444.1 C460.9,446.5 453.0,445.5 448.2,447.2 C443.5,448.9 440.1,454.0 436.0,454.3 C431.9,454.6 428.5,452.4 423.8,449.2 C419.0,446.0 412.9,439.8 407.5,435.0 C402.1,430.2 396.5,424.1 391.2,420.7 C385.9,417.3 379.6,418.7 375.9,414.6 C372.2,410.5 372.0,402.7 368.8,396.2 C365.6,389.8 360.6,384.0 356.5,375.9 C352.4,367.8 347.7,355.5 344.3,347.4 C340.9,339.2 339.3,333.5 336.0,327.0 C332.7,320.5 326.7,313.2 324.5,308.3 C322.3,303.4 323.9,301.0 322.7,297.3 C321.5,293.6 321.5,289.4 317.2,286.3 C312.9,283.2 301.8,282.3 297.0,279.0 C292.2,275.7 291.6,270.5 288.4,266.7 C285.2,262.9 281.3,259.5 277.8,256.0 C274.3,252.5 268.8,249.8 267.2,245.6 C265.7,241.4 268.5,231.0 268.5,231.0 C268.5,231.0 277.5,225.4 280.4,224.4 C283.3,223.3 283.7,224.9 286.0,224.7 C288.3,224.5 292.0,223.9 294.0,223.1 C296.0,222.3 298.0,220.0 298.0,220.0 C298.0,220.0 298.7,225.5 299.4,227.4 C300.1,229.2 299.2,229.8 302.0,231.1 C304.8,232.4 313.1,234.9 316.0,235.4 C318.9,235.9 319.7,234.3 319.7,234.3 C319.7,234.3 318.3,227.8 321.0,227.0 C323.7,226.2 331.5,230.0 336.0,229.5 C340.5,229.0 344.7,226.4 348.0,224.0 C351.3,221.6 355.6,215.0 355.6,215.0 C355.6,215.0 363.3,215.8 365.3,217.0 C367.3,218.2 366.7,219.7 367.4,222.0 C368.1,224.3 369.6,230.6 369.6,230.6 C369.6,230.6 372.8,231.2 376.0,231.6 C379.2,232.0 384.7,231.9 388.6,233.1 C392.5,234.3 396.2,237.4 399.6,238.6 C403.0,239.8 408.8,240.5 408.8,240.5 C408.8,240.5 409.1,235.9 407.9,233.1 C406.7,230.4 403.8,227.7 401.5,224.0 C399.2,220.3 396.2,216.0 394.1,211.1 C392.0,206.2 390.0,199.7 388.6,194.7 C387.2,189.7 388.3,184.4 385.9,180.9 C383.5,177.4 379.1,175.9 374.0,173.6 C368.9,171.3 362.3,168.9 355.6,167.2 C348.9,165.5 340.7,164.0 333.7,163.5 C326.7,163.0 319.9,163.3 313.5,164.4 C307.1,165.5 299.8,169.4 295.2,169.9 C290.6,170.4 286.0,167.2 286.0,167.2 C286.0,167.2 286.4,165.5 285.7,163.5 C285.0,161.5 283.1,160.2 281.8,155.3 C280.5,150.4 279.8,141.2 277.8,134.1 C275.8,127.0 273.4,119.1 269.9,112.9 C266.4,106.7 260.1,101.8 256.6,97.0 C253.1,92.2 252.5,88.9 248.7,83.8 C245.0,78.7 238.1,70.8 234.1,66.6 C230.1,62.4 228.9,60.8 224.9,58.6 C220.9,56.4 213.2,55.4 210.3,53.3 C207.4,51.2 207.6,46.2 207.6,46.2Z"/>
<path fill="#fff" d="M309.6,207.5 C311.4,205.9 314.4,203.2 318.0,201.6 C321.6,200.1 327.7,198.5 331.5,198.2 C335.3,197.9 337.9,198.7 340.6,200.0 C343.4,201.3 345.5,203.6 348.0,206.0 C350.5,208.4 355.1,211.8 355.6,214.5 C356.1,217.2 352.6,219.9 351.0,222.0 C349.4,224.1 348.5,225.8 346.0,227.0 C343.5,228.2 340.0,229.0 336.0,229.0 C332.0,229.0 325.7,229.2 322.0,227.0 C318.3,224.8 316.5,218.2 314.0,215.5 C311.5,212.8 307.7,212.3 307.0,211.0 C306.3,209.7 307.8,209.1 309.6,207.5Z"/>
<path fill="#000" d="M310.0,209.5 C310.0,209.5 313.6,211.7 316.0,211.5 C318.4,211.3 322.0,209.3 324.6,208.5 C327.2,207.7 328.9,206.8 331.5,206.5 C334.1,206.2 337.7,206.2 340.0,207.0 C342.3,207.8 343.2,208.6 345.5,211.0 C347.8,213.4 353.5,221.7 353.5,221.7 C353.5,221.7 354.0,223.9 352.5,222.5 C351.0,221.1 346.7,215.2 344.5,213.0 C342.3,210.8 341.7,210.1 339.5,209.5 C337.3,208.9 334.0,209.0 331.5,209.5 C329.0,210.0 327.2,211.4 324.6,212.3 C322.0,213.2 318.5,215.2 316.0,215.2 C313.5,215.1 310.5,212.9 309.5,212.0 C308.5,211.1 310.0,209.5 310.0,209.5Z"/>
<ellipse fill="#000" cx="335.5" cy="218" rx="10.5" ry="11"/>
<path fill="#000" d="M297.8,219.9 C297.8,219.9 300.0,220.8 303.7,222.0 C307.5,223.2 317.6,224.8 320.3,226.8 C323.0,228.9 319.7,234.3 319.7,234.3 C319.7,234.3 318.9,235.9 316.0,235.4 C313.1,234.9 304.8,232.4 302.0,231.1 C299.2,229.8 300.1,229.3 299.4,227.4 C298.7,225.5 297.8,219.9 297.8,219.9Z"/>
<path fill="#000" d="M404.6,196.2 C404.6,196.2 406.2,186.5 409.5,182.7 C412.8,178.9 420.1,176.4 424.5,173.4 C428.9,170.4 435.9,164.8 435.9,164.8 C435.9,164.8 431.0,173.6 430.2,177.7 C429.4,181.8 430.8,185.4 430.9,189.1 C431.0,192.8 431.6,197.0 430.9,199.8 C430.2,202.7 426.6,206.2 426.6,206.2 C426.6,206.2 427.0,199.4 425.9,197.0 C424.8,194.6 422.5,192.6 420.2,191.9 C418.0,191.2 415.0,191.9 412.4,192.6 C409.8,193.3 404.6,196.2 404.6,196.2Z"/>
<ellipse fill="#000" cx="417.5" cy="209.2" rx="8" ry="10" transform="rotate(-10 417.5 209.2)"/>
<circle fill="#fff" cx="412" cy="208" r="1.3"/>
<circle fill="#000" cx="418.29999999999995" cy="257.9" r="2"/>
<path fill="#000" d="M383.1,271.6 C385.2,268.9 392.0,267.4 396.0,268.0 C400.0,268.6 403.3,273.5 407.0,275.3 C410.7,277.1 414.0,278.9 418.0,279.0 C422.0,279.1 426.8,275.9 430.8,276.2 C434.8,276.5 438.1,278.8 441.8,280.8 C445.5,282.8 452.8,288.1 452.8,288.1 C452.8,288.1 448.9,291.3 445.5,293.6 C442.1,295.9 436.0,301.0 432.6,301.9 C429.2,302.8 427.1,300.8 425.3,299.1 C423.5,297.4 423.4,293.0 421.6,291.8 C419.8,290.6 416.1,290.9 414.3,291.8 C412.5,292.7 413.1,296.1 410.6,297.3 C408.2,298.5 403.3,299.7 399.6,299.1 C395.9,298.5 391.4,296.0 388.6,293.6 C385.9,291.2 384.0,288.2 383.1,284.5 C382.2,280.8 381.0,274.4 383.1,271.6Z"/>
<ellipse fill="#fff" cx="427" cy="290" rx="3" ry="1.3"/>
<path fill="#000" d="M381.0,339.2 C382.2,337.0 384.4,336.2 387.1,336.2 C389.8,336.2 393.9,338.0 397.3,339.2 C400.7,340.4 402.4,343.3 407.5,343.3 C412.6,343.3 421.0,340.4 427.8,339.2 C434.6,338.0 443.8,336.7 448.2,336.2 C452.6,335.7 454.3,336.2 454.3,336.2 C454.3,336.2 455.7,340.9 452.3,342.3 C448.9,343.6 440.1,342.9 434.0,344.3 C427.9,345.6 420.4,348.4 415.6,350.4 C410.8,352.4 406.1,354.1 405.4,356.5 C404.7,358.9 407.1,363.5 411.5,364.7 C415.9,365.9 425.1,364.4 431.9,363.7 C438.7,363.0 452.3,360.6 452.3,360.6 C452.3,360.6 452.3,364.0 448.2,365.7 C444.1,367.4 433.9,369.3 427.8,370.8 C421.7,372.3 415.9,373.5 411.5,374.9 C407.1,376.2 404.4,378.9 401.4,378.9 C398.3,378.9 395.3,376.8 393.2,374.9 C391.2,373.0 391.1,369.8 389.1,367.7 C387.1,365.7 383.5,363.6 381.0,362.6 C378.5,361.6 373.9,361.6 373.9,361.6 C373.9,361.6 373.9,355.5 374.9,353.5 C375.9,351.5 379.0,351.8 380.0,349.4 C381.0,347.0 379.8,341.4 381.0,339.2Z"/></svg>
<svg class="a" style="left:1382px;top:150px" width="84" height="85" viewBox="0 0 84 85"><path d="M.75 28V.75H28M56 .75H83.25V28M83.25 57V84.25H56M28 84.25H.75V57" fill="none" stroke="#1c2747" stroke-width="1.5"/></svg>
<div class="a" style="left:1384px;top:239px;width:80px;height:80px;border:1px solid #222;background:#fff"></div>
<svg class="a" style="left:1384px;top:326px" width="80" height="80" viewBox="0 0 80 80">
<defs>
<linearGradient id="hd" x1="0" y1="0.1" x2="1" y2="0.3"><stop offset="0" stop-color="#201c17"/><stop offset="0.4" stop-color="#3a352c"/><stop offset="0.62" stop-color="#d8d4bc"/><stop offset="0.75" stop-color="#f4f2e2"/><stop offset="1" stop-color="#e8e6d0"/></linearGradient>
<radialGradient id="top" cx="0.6" cy="0.12" r="0.3"><stop offset="0" stop-color="#fbf8ea" stop-opacity="1"/><stop offset="1" stop-color="#fbf8ea" stop-opacity="0"/></radialGradient>
<linearGradient id="sh" x1="0" y1="0" x2="1" y2="1"><stop offset="0" stop-color="#e8341e"/><stop offset="0.35" stop-color="#c82814"/><stop offset="0.6" stop-color="#ee3a20"/><stop offset="1" stop-color="#e23018"/></linearGradient>
</defs>
<rect width="80" height="80" fill="#88847f"/><path d="M14 44 C18 52 26 58 40 60 C48 60 55 56 58 52 L50 50 C40 54 28 52 20 44 Z" fill="#2a241e"/>
<path d="M0 55 C5 52 10 50 15 49 C22 54 30 58 40 58 C48 57 55 53 62 51 C67 52 70 56 71 62 C72 67 73 70 79 72 L80 80 L0 80 Z" fill="url(#sh)"/>
<path d="M72 71 C75 72 78 72 79.5 74 L79.5 79.5 L73 79.5 Z" fill="#f2efe4"/>
<path d="M34 4.6 C25 5 16 12 12.5 22 C11 28 12 34 13 38 C14 43 16 47 20 50 C27 55 38 56 47 54.5 C51 53.5 54 50 54.5 46 C55 40 54 34 53.6 31 C53 25 52.5 20 51.5 17 C49 10 42 4.5 34 4.6 Z" fill="url(#hd)"/>
<path d="M34 4.6 C25 5 16 12 12.5 22 C11 28 12 34 13 38 C14 43 16 47 20 50 C27 55 38 56 47 54.5 C51 53.5 54 50 54.5 46 C55 40 54 34 53.6 31 C53 25 52.5 20 51.5 17 C49 10 42 4.5 34 4.6 Z" fill="url(#top)"/>
<path d="M13.5 30 C16 29 20 31 21 35 C21.5 39 20 42 17 42 C15 41 13.5 36 13.5 30 Z" fill="#2a2620"/>
<path d="M32 19 C39 16 46 16 53 18 L53 20.5 C46 19 40 19 32 22 Z" fill="#6a6450" opacity=".55"/>
<circle cx="38" cy="23" r="1.6" fill="#c02838"/><circle cx="48" cy="22.5" r="1.4" fill="#c02838"/>
<path d="M40 30.5 C42 32.5 45 33 48 31.5" stroke="#2a251e" stroke-width="2.2" fill="none"/>
<path d="M39 39 C43 39.5 47 39 51 38" stroke="#8a8468" stroke-width="1" fill="none"/><path d="M14 34 C16 44 22 50 30 54 C24 48 20 40 19 32 Z" fill="#1e1a16" opacity=".75"/>
<path d="M22 36 C26 42 28 48 34 53" stroke="#6a6450" stroke-width="2" fill="none" opacity=".6"/>
</svg>
<div class="a" style="left:1384px;top:326px;width:80px;height:80px;border:1px solid #222"></div>
<svg class="a" style="left:1556px;top:360px" width="11" height="13" viewBox="0 0 11 13"><path d="M2.5 6V4a3 3 0 0 1 6 0v2" fill="none" stroke="#333" stroke-width="1.2"/><rect x=".8" y="5.8" width="9.4" height="6.6" rx="1" fill="none" stroke="#333" stroke-width="1.2"/><rect x="5" y="8" width="1.2" height="2.2" fill="#333"/></svg>
<div class="a" style="left:1350px;top:411px;width:235px;height:327px;background:#c8c8c8"></div>
<div class="a" style="left:1585px;top:148px;width:14px;height:590px;background:linear-gradient(90deg,#d0d0d0,#eeeeee 60%,#f4f4f4)"></div>
<div class="a" style="left:1350px;top:740px;width:249px;height:18px;background:linear-gradient(#e2e2e2,#d9d9d9);border-top:1px solid #9c9c9c"></div>
<svg class="a" style="left:1396px;top:744px" width="15" height="11" viewBox="0 0 15 11"><path d="M5.5 2.2H4a3.3 3.3 0 0 0 0 6.6h1.5M9.5 2.2H11a3.3 3.3 0 0 1 0 6.6H9.5M4.5 5.5h6" fill="none" stroke="#8a8a8a" stroke-width="2"/></svg>
<div class="t" style="left:1424px;top:742px;font-size:13px;color:#222;font-style:italic;font-family:'Liberation Serif',serif;font-weight:bold;-webkit-text-stroke:0">fx</div>
<div class="tri" style="left:1438px;top:754px;border-left:2px solid transparent;border-right:2px solid transparent;border-top:2px solid #333;border-bottom:0"></div>
<svg class="a" style="left:1451px;top:745px" width="12" height="10" viewBox="0 0 12 10"><rect x=".7" y=".7" width="10.6" height="8.6" fill="#7a7a7a" stroke="#222" stroke-width="1.4"/><circle cx="6" cy="5" r="2.3" fill="#ddd" stroke="#333" stroke-width=".6"/></svg>
<svg class="a" style="left:1478px;top:744px" width="11" height="11" viewBox="0 0 11 11"><circle cx="5.5" cy="5.5" r="4.7" fill="#eee" stroke="#222" stroke-width="1.2"/><path d="M5.5.8a4.7 4.7 0 0 0 0 9.4z" fill="#222" transform="rotate(35 5.5 5.5)"/></svg>
<div class="tri" style="left:1492px;top:754px;border-left:2px solid transparent;border-right:2px solid transparent;border-top:2px solid #333;border-bottom:0"></div>
<svg class="a" style="left:1505px;top:744px" width="13" height="11" viewBox="0 0 13 11"><path d="M.6 .8h4.2l1 1.4h6.6v8.2H.6z" fill="#b8b8b8" stroke="#222" stroke-width="1.1"/><path d="M.6 3.2h11.8" stroke="#555" stroke-width=".8"/></svg>
<svg class="a" style="left:1533px;top:744px" width="11" height="11" viewBox="0 0 11 11"><path d="M.6.6h9.8v9.8H4.2L.6 6.8z" fill="#e4e4e4" stroke="#222" stroke-width="1.1"/><path d="M.6 6.8h3.6v3.6z" fill="#888" stroke="#222" stroke-width=".9"/></svg>
<svg class="a" style="left:1559px;top:743px" width="11" height="12" viewBox="0 0 11 12"><path d="M.3 2.8h10.4M3.7 2.6V.9h3.6v1.7" fill="none" stroke="#222" stroke-width="1.3"/><path d="M1.3 3.8h8.4l-.7 7.7H2z" fill="#333"/><path d="M3.6 5v5.5M5.5 5v5.5M7.4 5v5.5" stroke="#bbb" stroke-width=".8"/></svg>
<svg class="a" style="left:1587px;top:748px" width="10" height="10" viewBox="0 0 10 10"><g fill="#8a8a8a"><rect x="8" y="0" width="1" height="1"/><rect x="6" y="2" width="1" height="1"/><rect x="8" y="2" width="1" height="1"/><rect x="4" y="4" width="1" height="1"/><rect x="6" y="4" width="1" height="1"/><rect x="8" y="4" width="1" height="1"/><rect x="2" y="6" width="1" height="1"/><rect x="4" y="6" width="1" height="1"/><rect x="6" y="6" width="1" height="1"/><rect x="8" y="6" width="1" height="1"/><rect x="0" y="8" width="1" height="1"/><rect x="2" y="8" width="1" height="1"/><rect x="4" y="8" width="1" height="1"/><rect x="6" y="8" width="1" height="1"/><rect x="8" y="8" width="1" height="1"/></g></svg>
<div class="a" style="left:1350px;top:758px;width:249px;height:3px;background:linear-gradient(90deg,#7a7a7a,#606060 50%,#7a7a7a)"></div>
<div class="a" style="left:1350px;top:761px;width:249px;height:17px;background:linear-gradient(#8e8e8e,#9c9c9c)"></div>
<div class="a" style="left:1350px;top:761px;width:57px;height:17px;background:linear-gradient(#8c8c8c,#949494);border-right:1px solid #7a7a7a"></div>
<div class="a" style="left:1407px;top:761px;width:38px;height:17px;background:#d9d9d9;border-top:1px solid #e8e8e8"></div>
<div class="t" style="left:1357.4px;top:765.00px;font-size:9.7px;color:#2a2a2a;">Channels</div>
<div class="t" style="left:1414.2px;top:765.00px;font-size:9.6px;color:#1d1d1d;">Paths</div>
<div class="a" style="left:1581px;top:768px;width:0;height:0;border-left:3px solid transparent;border-right:3px solid transparent;border-top:3px solid #333"></div><div class="a" style="left:1587px;top:766px;width:8px;height:8px;background:repeating-linear-gradient(180deg,#333 0 1px,transparent 1px 2px)"></div>
<div class="a" style="left:1350px;top:778px;width:249px;height:2px;background:#d9d9d9"></div>
<div class="a" style="left:1350px;top:780px;width:235px;height:201px;background:#c7c7c7"></div>
<div class="a" style="left:1585px;top:780px;width:14px;height:201px;background:linear-gradient(90deg,#d0d0d0,#eeeeee 60%,#f4f4f4)"></div>
<div class="a" style="left:1350px;top:981px;width:249px;height:1px;background:#8a8a8a"></div>
<div class="a" style="left:1599px;top:46px;width:3px;height:936px;background:linear-gradient(90deg,#7a7a7a,#606060 50%,#7a7a7a)"></div>
<div class="a" style="left:1602px;top:46px;width:37px;height:936px;background:#d6d6d6"></div>
<div class="a" style="left:1639px;top:46px;width:3px;height:936px;background:linear-gradient(90deg,#7a7a7a,#606060 50%,#7a7a7a)"></div>
<div class="a" style="left:1642px;top:46px;width:37px;height:936px;background:#d6d6d6"></div>
<div class="a" style="left:1679px;top:34px;width:1px;height:948px;background:linear-gradient(90deg,#7a7a7a,#606060 50%,#7a7a7a)"></div>
<div class="a" style="left:1602px;top:46px;width:37px;height:41px;border-top:1px solid #e6e6e6;border-bottom:1px solid #7a7a7a"></div><div class="grip" style="left:1611px;top:49px;width:20px"></div><svg class="a" style="left:1612px;top:60px" width="18" height="18" viewBox="0 0 18 18"><circle cx="9" cy="9" r="8.7" fill="#222"/><circle cx="9" cy="4.5" r="1.5" fill="#eee"/><rect x="7.6" y="7" width="2.8" height="7" fill="#eee"/></svg>
<div class="a" style="left:1602px;top:87px;width:37px;height:41px;border-top:1px solid #e6e6e6;border-bottom:1px solid #7a7a7a"></div><div class="grip" style="left:1611px;top:90px;width:20px"></div><svg class="a" style="left:1613px;top:100px" width="18" height="19" viewBox="0 0 18 19"><rect x="4.5" y="10" width="7.5" height="8.5" fill="#222"/><path d="M6 10.5 4 5M8.3 10.5V3.5M10.5 10.5 13 6" stroke="#222" stroke-width="1.1"/><path d="M4.2 5.5C1.5 4.5 .8 1.5 1.8 .8 3.8 1.5 5 3.5 4.2 5.5zM8.3 4C7 3 7 .8 8.3 .3 9.6.8 9.6 3 8.3 4zM12.5 6.5C12 4 14 2.5 15.8 3 16 4.5 14.5 6.5 12.5 6.5z" fill="#222"/></svg>
<div class="a" style="left:1602px;top:128px;width:37px;height:41px;border-top:1px solid #e6e6e6;border-bottom:1px solid #7a7a7a"></div><div class="grip" style="left:1611px;top:131px;width:20px"></div><svg class="a" style="left:1611px;top:142px" width="20" height="18" viewBox="0 0 20 18"><path d="M1 1.5h2M1 4.5h2M1 7.5h2M4.5 1.5h4M4.5 4.5h4M4.5 7.5h3" stroke="#222" stroke-width="1.3"/><path d="M11 1.5a2.3 2.3 0 0 1 3.6 0c.8.9.4 2-.3 2.5v4h-3V4c-.7-.5-1.1-1.6-.3-2.5z" fill="#222"/><rect x="6" y="8" width="13" height="5" rx=".5" fill="#222"/><rect x="6.5" y="14.5" width="12" height="1.6" fill="#222"/></svg>
<div class="a" style="left:1602px;top:169px;width:37px;height:41px;border-top:1px solid #e6e6e6;border-bottom:1px solid #7a7a7a"></div><div class="grip" style="left:1611px;top:172px;width:20px"></div><svg class="a" style="left:1615px;top:185px" width="12" height="16" viewBox="0 0 12 16"><path d="M5.5 .5H11.5V2H5.5A3.5 3.5 0 0 1 5.5 .5z" fill="#222"/><circle cx="4.3" cy="4.3" r="3.8" fill="#222"/><rect x="4.6" y=".5" width="2" height="7.5" fill="#222"/><rect x="6.6" y=".5" width="1.8" height="15" fill="#222"/><rect x="9.6" y=".5" width="1.8" height="15" fill="#222"/></svg>
<div class="a" style="left:1602px;top:210px;width:37px;height:41px;border-top:1px solid #e6e6e6;border-bottom:1px solid #7a7a7a"></div><div class="grip" style="left:1611px;top:213px;width:20px"></div><svg class="a" style="left:1612px;top:225px" width="18" height="18" viewBox="0 0 18 18"><circle cx="9.6" cy="3.6" r="3.2" fill="#222"/><rect x="9.6" y=".4" width="1.6" height="6.5" fill="#222"/><rect x="11.2" y=".4" width="1.5" height="12" fill="#222"/><rect x="14" y=".4" width="1.5" height="12" fill="#222"/><rect x="9.6" y=".4" width="6" height="1.3" fill="#222"/><rect x=".7" y="8" width="6" height="6" fill="#eee" stroke="#222" stroke-width="1.2"/><rect x="3.5" y="10.8" width="6" height="6" fill="#eee" stroke="#222" stroke-width="1.2"/><rect x="3.5" y="10.8" width="3.2" height="3.2" fill="#222"/></svg>
<div class="a" style="left:1602px;top:251px;width:37px;height:41px;border-top:1px solid #e6e6e6;border-bottom:1px solid #7a7a7a"></div><div class="grip" style="left:1611px;top:254px;width:20px"></div><svg class="a" style="left:1611px;top:265px" width="21" height="19" viewBox="0 0 21 19"><path d="M4.5 4 16.5 14.5" stroke="#222" stroke-width="2"/><path d="M1 3.5C1 1.5 2.5.3 4.5.5L3.3 2.7 4.8 4.2 7 3C7.2 5 6 6.5 4 6.5 2.3 6.5 1 5.3 1 3.5z" fill="#222"/><circle cx="17.5" cy="15.2" r="2.2" fill="none" stroke="#222" stroke-width="1.4"/><path d="M19 1 9.5 10.5" stroke="#222" stroke-width="1.6"/><path d="M10.5 9.5 2.5 17.5" stroke="#222" stroke-width="3.2" stroke-linecap="round"/></svg>
<div class="a" style="left:1642px;top:46px;width:37px;height:41px;border-top:1px solid #e6e6e6;border-bottom:1px solid #7a7a7a"></div><div class="grip" style="left:1651px;top:49px;width:20px"></div><svg class="a" style="left:1651px;top:59px" width="20" height="20" viewBox="0 0 20 20"><circle cx="10" cy="10" r="5.5" fill="none" stroke="#222" stroke-width="1.6"/><circle cx="10" cy="10" r="2" fill="#222"/><path d="M10 0v20M0 10h20M3 3l14 14M17 3 3 17" stroke="#222" stroke-width="1.3"/></svg>
<div class="a" style="left:1642px;top:87px;width:37px;height:41px;border-top:1px solid #e6e6e6;border-bottom:1px solid #7a7a7a"></div><div class="grip" style="left:1651px;top:90px;width:20px"></div><svg class="a" style="left:1654px;top:103px" width="15" height="14" viewBox="0 0 15 14"><path d="M1 0 15 6.5 1 13.5z" fill="#222"/></svg>
</body></html>
